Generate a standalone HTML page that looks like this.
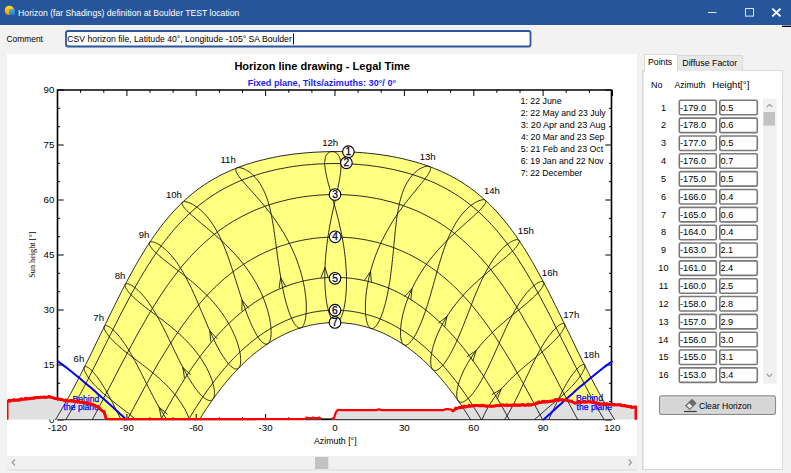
<!DOCTYPE html><html><head><meta charset="utf-8"><style>html,body{margin:0;padding:0;width:791px;height:473px;overflow:hidden;background:#f0f0f0;font-family:"Liberation Sans",sans-serif}</style></head><body><svg width="791" height="473" viewBox="0 0 791 473" font-family="Liberation Sans,sans-serif" style="position:absolute;left:0;top:0;display:block"><defs><clipPath id="plot"><rect x="50" y="90" width="570" height="330"/></clipPath><clipPath id="pan"><rect x="7" y="54" width="630" height="402"/></clipPath></defs><rect x="0" y="0" width="791" height="473" fill="#f2f2f2"/>
<rect x="0" y="0" width="791" height="25" fill="#26559b"/>
<rect x="0" y="25" width="791" height="1" fill="#f7f7f7"/>
<rect x="782" y="25.6" width="9" height="1.4" fill="#000"/>
<defs><linearGradient id="gy" x1="0" y1="0" x2="0" y2="1"><stop offset="0" stop-color="#ffe000"/><stop offset="1" stop-color="#f59a00"/></linearGradient><linearGradient id="gb" x1="0" y1="0" x2="0" y2="1"><stop offset="0" stop-color="#4fb0f0"/><stop offset="1" stop-color="#2a78cc"/></linearGradient></defs><circle cx="9.4" cy="10.4" r="4.7" fill="url(#gy)"/><path d="M9.2 9.0 L14.6 9.0 L14.6 15.1 L9.2 15.1Z" fill="url(#gb)"/>
<text x="18.11" y="15.90" font-size="9.4" fill="#ffffff" textLength="221.20" lengthAdjust="spacingAndGlyphs">Horizon (far Shadings) definition at Boulder TEST location</text>
<rect x="708" y="12" width="8.5" height="1" fill="#e6eaf2"/>
<rect x="745.5" y="8.5" width="8" height="7.6" fill="none" stroke="#dde3ef" stroke-width="1"/>
<path d="M772.3 8.6 L780.5 16.4 M780.5 8.6 L772.3 16.4" stroke="#ffffff" stroke-width="2"/>
<text x="6.48" y="42.00" font-size="9.9" fill="#000" textLength="36.46" lengthAdjust="spacingAndGlyphs">Comment</text>
<rect x="66" y="31" width="464.5" height="15.5" rx="2" fill="#fff" stroke="#2b579a" stroke-width="1.8"/>
<text x="67.27" y="41.80" font-size="9.9" fill="#000" textLength="224.55" lengthAdjust="spacingAndGlyphs">CSV horizon file, Latitude 40°, Longitude -105° SA Boulder</text>
<rect x="293" y="33.5" width="1" height="11" fill="#000"/>
<rect x="7" y="54" width="630" height="402" fill="#fff"/>
<rect x="7" y="456" width="630" height="14" fill="#f0f0f0"/>
<rect x="7" y="469.5" width="630" height="1" fill="#dcdcdc"/>
<rect x="315" y="457" width="13.3" height="12" fill="#c2c2c2"/>
<path d="M15 459.5 L12.2 462.5 L15 465.5" fill="none" stroke="#9a9a9a" stroke-width="1.2"/>
<path d="M628.7 459.5 L631.5 462.5 L628.7 465.5" fill="none" stroke="#9a9a9a" stroke-width="1.2"/>
<text x="234.38" y="69.90" font-size="11.5" font-weight="bold" fill="#000" textLength="175.58" lengthAdjust="spacingAndGlyphs">Horizon line drawing - Legal Time</text>
<text x="247.71" y="86.30" font-size="9.5" font-weight="bold" fill="#1a1aff" textLength="148.37" lengthAdjust="spacingAndGlyphs">Fixed plane, Tilts/azimuths: 30°/ 0°</text>
<text x="43.57" y="93.40" font-size="9.7" fill="#000">90</text>
<text x="43.62" y="148.40" font-size="9.7" fill="#000">75</text>
<text x="43.57" y="203.40" font-size="9.7" fill="#000">60</text>
<text x="43.62" y="258.40" font-size="9.7" fill="#000">45</text>
<text x="43.57" y="313.40" font-size="9.7" fill="#000">30</text>
<text x="43.62" y="368.40" font-size="9.7" fill="#000">15</text>
<text x="48.96" y="423.40" font-size="9.7" fill="#000">0</text>
<text x="47.78" y="430.80" font-size="9.7" fill="#000">-120</text>
<text x="119.84" y="430.80" font-size="9.7" fill="#000">-90</text>
<text x="189.22" y="430.80" font-size="9.7" fill="#000">-60</text>
<text x="258.59" y="430.80" font-size="9.7" fill="#000">-30</text>
<text x="332.31" y="430.80" font-size="9.7" fill="#000">0</text>
<text x="398.99" y="430.80" font-size="9.7" fill="#000">30</text>
<text x="468.29" y="430.80" font-size="9.7" fill="#000">60</text>
<text x="537.69" y="430.80" font-size="9.7" fill="#000">90</text>
<text x="604.23" y="430.80" font-size="9.7" fill="#000">120</text>
<text x="314.00" y="443.50" font-size="9.3" fill="#000" textLength="42.58" lengthAdjust="spacingAndGlyphs">Azimuth [°]</text>
<text x="-23.03" y="0.00" font-size="8.5" font-family="Liberation Serif,serif" fill="#000" textLength="46.12" lengthAdjust="spacingAndGlyphs" transform="translate(34.8 254.7) rotate(-90)">Sun height [°]</text>
<g clip-path="url(#plot)">
<path d="M55.3 420L55.4 419.8L56.5 418L57.6 416.2L58.7 414.3L59.8 412.5L60.9 410.7L62 408.8L63.1 406.9L64.2 405.1L65.2 403.2L66.3 401.3L67.4 399.4L68.4 397.5L69.5 395.6L70.5 393.7L71.6 391.8L72.6 389.8L73.6 387.9L74.7 386L75.7 384L76.7 382.1L77.7 380.1L78.8 378.1L79.8 376.2L80.8 374.2L81.8 372.2L82.8 370.2L83.8 368.2L84.8 366.2L85.8 364.2L86.9 362.2L87.9 360.2L88.9 358.2L89.9 356.1L90.9 354.1L91.9 352.1L92.9 350.1L93.9 348L94.8 346L95.8 343.9L96.8 341.9L97.8 339.8L98.8 337.8L99.8 335.7L100.8 333.6L101.8 331.6L102.9 329.5L103.9 327.4L104.9 325.3L105.9 323.3L106.9 321.2L107.9 319.1L108.9 317L109.9 314.9L111 312.8L112 310.7L113 308.7L114.1 306.6L115.1 304.5L116.1 302.4L117.2 300.3L118.2 298.2L119.3 296.1L120.4 293.9L121.4 291.8L122.5 289.7L123.6 287.6L124.7 285.5L125.8 283.4L126.9 281.3L128 279.2L129.2 277.1L130.3 275L131.5 272.9L132.6 270.8L133.8 268.7L135 266.6L136.2 264.5L137.4 262.4L138.6 260.3L139.8 258.2L141.1 256.1L142.3 254L143.6 251.9L144.9 249.8L146.2 247.7L147.6 245.6L148.9 243.6L150.3 241.5L151.7 239.4L153.1 237.3L154.5 235.3L156 233.2L157.5 231.2L159 229.1L160.5 227.1L162.1 225L163.7 223L165.3 221L167 219L168.6 217L170.4 215L172.1 213L173.9 211L175.8 209L177.7 207.1L179.6 205.1L181.6 203.2L183.6 201.3L185.7 199.4L187.9 197.5L190.1 195.6L192.3 193.7L194.6 191.9L197 190L199.5 188.2L202 186.4L204.6 184.7L207.2 182.9L210 181.2L212.8 179.5L215.8 177.9L218.8 176.2L221.9 174.6L225.1 173.1L228.4 171.5L231.9 170L235.4 168.6L239 167.1L242.8 165.8L246.7 164.4L250.7 163.2L254.8 161.9L259 160.8L263.4 159.7L267.9 158.6L272.5 157.6L277.2 156.7L282 155.8L287 155.1L292 154.3L297.2 153.7L302.4 153.2L307.7 152.7L313.1 152.3L318.5 152L324 151.8L329.5 151.6L335 151.6L340.5 151.6L346 151.8L351.5 152L356.9 152.3L362.3 152.7L367.6 153.2L372.8 153.7L378 154.3L383 155.1L388 155.8L392.8 156.7L397.5 157.6L402.1 158.6L406.6 159.7L411 160.8L415.2 161.9L419.3 163.2L423.3 164.4L427.2 165.8L431 167.1L434.6 168.6L438.1 170L441.6 171.5L444.9 173.1L448.1 174.6L451.2 176.2L454.2 177.9L457.2 179.5L460 181.2L462.8 182.9L465.4 184.7L468 186.4L470.5 188.2L473 190L475.4 191.9L477.7 193.7L479.9 195.6L482.1 197.5L484.3 199.4L486.4 201.3L488.4 203.2L490.4 205.1L492.3 207.1L494.2 209L496.1 211L497.9 213L499.6 215L501.4 217L503 219L504.7 221L506.3 223L507.9 225L509.5 227.1L511 229.1L512.5 231.2L514 233.2L515.5 235.3L516.9 237.3L518.3 239.4L519.7 241.5L521.1 243.6L522.4 245.6L523.8 247.7L525.1 249.8L526.4 251.9L527.7 254L528.9 256.1L530.2 258.2L531.4 260.3L532.6 262.4L533.8 264.5L535 266.6L536.2 268.7L537.4 270.8L538.5 272.9L539.7 275L540.8 277.1L542 279.2L543.1 281.3L544.2 283.4L545.3 285.5L546.4 287.6L547.5 289.7L548.6 291.8L549.6 293.9L550.7 296.1L551.8 298.2L552.8 300.3L553.9 302.4L554.9 304.5L555.9 306.6L557 308.7L558 310.7L559 312.8L560.1 314.9L561.1 317L562.1 319.1L563.1 321.2L564.1 323.3L565.1 325.3L566.1 327.4L567.1 329.5L568.2 331.6L569.2 333.6L570.2 335.7L571.2 337.8L572.2 339.8L573.2 341.9L574.2 343.9L575.2 346L576.1 348L577.1 350.1L578.1 352.1L579.1 354.1L580.1 356.1L581.1 358.2L582.1 360.2L583.1 362.2L584.2 364.2L585.2 366.2L586.2 368.2L587.2 370.2L588.2 372.2L589.2 374.2L590.2 376.2L591.2 378.1L592.3 380.1L593.3 382.1L594.3 384L595.3 386L596.4 387.9L597.4 389.8L598.4 391.8L599.5 393.7L600.5 395.6L601.6 397.5L602.6 399.4L603.7 401.3L604.8 403.2L605.8 405.1L606.9 406.9L608 408.8L609.1 410.7L610.2 412.5L611.3 414.3L612.4 416.2L613.5 418L614.6 419.8L614.7 420L470.8 420L470.2 419L469.1 417.2L467.9 415.4L466.8 413.6L465.7 411.9L464.5 410.1L463.4 408.4L462.2 406.6L461 404.9L459.9 403.2L458.7 401.5L457.5 399.8L456.3 398.2L455.1 396.5L453.9 394.8L452.7 393.2L451.4 391.6L450.2 390L449 388.4L447.7 386.8L446.4 385.2L445.2 383.6L443.9 382.1L442.6 380.5L441.3 379L440 377.5L438.7 376L437.4 374.5L436.1 373.1L434.7 371.6L433.4 370.2L432 368.8L430.7 367.4L429.3 366L427.9 364.6L426.5 363.3L425.1 361.9L423.7 360.6L422.3 359.3L420.8 358L419.4 356.8L417.9 355.5L416.5 354.3L415 353.1L413.5 351.9L412 350.8L410.5 349.6L409 348.5L407.5 347.4L406 346.3L404.5 345.2L402.9 344.2L401.3 343.2L399.8 342.2L398.2 341.2L396.6 340.2L395 339.3L393.4 338.4L391.8 337.5L390.2 336.6L388.6 335.8L386.9 335L385.3 334.2L383.6 333.4L382 332.7L380.3 331.9L378.6 331.3L376.9 330.6L375.3 329.9L373.6 329.3L371.9 328.7L370.1 328.2L368.4 327.6L366.7 327.1L365 326.6L363.2 326.2L361.5 325.7L359.8 325.3L358 325L356.3 324.6L354.5 324.3L352.7 324L351 323.7L349.2 323.5L347.4 323.3L345.7 323.1L343.9 322.9L342.1 322.8L340.3 322.7L338.6 322.6L336.8 322.6L335 322.6L333.2 322.6L331.4 322.6L329.7 322.7L327.9 322.8L326.1 322.9L324.3 323.1L322.6 323.3L320.8 323.5L319 323.7L317.3 324L315.5 324.3L313.7 324.6L312 325L310.2 325.3L308.5 325.7L306.8 326.2L305 326.6L303.3 327.1L301.6 327.6L299.9 328.2L298.1 328.7L296.4 329.3L294.7 329.9L293.1 330.6L291.4 331.3L289.7 331.9L288 332.7L286.4 333.4L284.7 334.2L283.1 335L281.4 335.8L279.8 336.6L278.2 337.5L276.6 338.4L275 339.3L273.4 340.2L271.8 341.2L270.2 342.2L268.7 343.2L267.1 344.2L265.5 345.2L264 346.3L262.5 347.4L261 348.5L259.5 349.6L258 350.8L256.5 351.9L255 353.1L253.5 354.3L252.1 355.5L250.6 356.8L249.2 358L247.7 359.3L246.3 360.6L244.9 361.9L243.5 363.3L242.1 364.6L240.7 366L239.3 367.4L238 368.8L236.6 370.2L235.3 371.6L233.9 373.1L232.6 374.5L231.3 376L230 377.5L228.7 379L227.4 380.5L226.1 382.1L224.8 383.6L223.6 385.2L222.3 386.8L221 388.4L219.8 390L218.6 391.6L217.3 393.2L216.1 394.8L214.9 396.5L213.7 398.2L212.5 399.8L211.3 401.5L210.1 403.2L209 404.9L207.8 406.6L206.6 408.4L205.5 410.1L204.3 411.9L203.2 413.6L202.1 415.4L200.9 417.2L199.8 419L199.2 420Z" fill="#ffff80"/>
</g>
<path d="M57.5 420h6.2M611.5 420h-6.2M57.5 401.7h2.6M611.5 401.7h-2.6M57.5 383.3h2.6M611.5 383.3h-2.6M57.5 365h6.2M611.5 365h-6.2M57.5 346.7h2.6M611.5 346.7h-2.6M57.5 328.3h2.6M611.5 328.3h-2.6M57.5 310h6.2M611.5 310h-6.2M57.5 291.7h2.6M611.5 291.7h-2.6M57.5 273.3h2.6M611.5 273.3h-2.6M57.5 255h6.2M611.5 255h-6.2M57.5 236.7h2.6M611.5 236.7h-2.6M57.5 218.3h2.6M611.5 218.3h-2.6M57.5 200h6.2M611.5 200h-6.2M57.5 181.7h2.6M611.5 181.7h-2.6M57.5 163.3h2.6M611.5 163.3h-2.6M57.5 145h6.2M611.5 145h-6.2M57.5 126.7h2.6M611.5 126.7h-2.6M57.5 108.3h2.6M611.5 108.3h-2.6M57.5 90h6.2M611.5 90h-6.2M57.5 90v6M57.5 420v-6M80.6 90v2.8M80.6 420v-2.8M103.8 90v2.8M103.8 420v-2.8M126.9 90v6M126.9 420v-6M150 90v2.8M150 420v-2.8M173.1 90v2.8M173.1 420v-2.8M196.2 90v6M196.2 420v-6M219.4 90v2.8M219.4 420v-2.8M242.5 90v2.8M242.5 420v-2.8M265.6 90v6M265.6 420v-6M288.8 90v2.8M288.8 420v-2.8M311.9 90v2.8M311.9 420v-2.8M335 90v6M335 420v-6M358.1 90v2.8M358.1 420v-2.8M381.2 90v2.8M381.2 420v-2.8M404.4 90v6M404.4 420v-6M427.5 90v2.8M427.5 420v-2.8M450.6 90v2.8M450.6 420v-2.8M473.8 90v6M473.8 420v-6M496.9 90v2.8M496.9 420v-2.8M520 90v2.8M520 420v-2.8M543.1 90v6M543.1 420v-6M566.2 90v2.8M566.2 420v-2.8M589.4 90v2.8M589.4 420v-2.8M612.5 90v6M612.5 420v-6" stroke="#000" stroke-width="1" fill="none"/>
<path d="M57.5 420V90H611.5V420" stroke="#000" stroke-width="1.6" fill="none"/>
<text x="520.44" y="103.70" font-size="9.8" fill="#000" textLength="41.22" lengthAdjust="spacingAndGlyphs">1: 22 June</text>
<text x="520.67" y="115.78" font-size="9.8" fill="#000" textLength="85.02" lengthAdjust="spacingAndGlyphs">2: 22 May and 23 July</text>
<text x="520.78" y="127.86" font-size="9.8" fill="#000" textLength="84.78" lengthAdjust="spacingAndGlyphs">3: 20 Apr and 23 Aug</text>
<text x="520.93" y="139.94" font-size="9.8" fill="#000" textLength="83.45" lengthAdjust="spacingAndGlyphs">4: 20 Mar and 23 Sep</text>
<text x="520.75" y="152.02" font-size="9.8" fill="#000" textLength="82.40" lengthAdjust="spacingAndGlyphs">5: 21 Feb and 23 Oct</text>
<text x="520.66" y="164.10" font-size="9.8" fill="#000" textLength="82.95" lengthAdjust="spacingAndGlyphs">6: 19 Jan and 22 Nov</text>
<text x="520.67" y="176.18" font-size="9.8" fill="#000" textLength="61.46" lengthAdjust="spacingAndGlyphs">7: 22 December</text>
<g clip-path="url(#pan)">
<path d="M7 419.5L7 419.5L7 401.3L8 401.2L9 400.9L10 401.1L11 400.9L12 400.4L13 400.3L14 400.2L15 400.3L16 400L17 400.2L18 400.1L19 400.2L20 400.1L21 399.4L22 399.4L23 399.2L24 399.4L25 399.2L26 398.8L27 399.1L28 398.7L29 398.7L30 398.8L31 398.3L32 398.3L33 398.3L34 398.4L35 397.8L36 397.5L37 397.3L38 397.7L39 397.6L40 397.3L41 397.3L42 397.4L43 397.2L44 396.9L45 397.3L46 397.4L47 397.1L48 396.9L49 397L50 396.9L51 397.2L52 397.6L53 397.6L54 398.2L55 398.6L56 398.4L57 398.7L58 399.4L59 399L60 399.3L61 399.7L62 399.5L63 399.9L64 400.5L65 400.4L66 400.6L67 401L68 401.1L69 401L70 400.9L71 401L72 401.2L73 401.4L74 401.3L75 401.4L76 401.5L77 402L78 401.8L79 402L80 402.4L81 402.3L82 402.3L83 402.6L84 403.1L85 402.7L86 403.2L87 403.4L88 403.6L89 404L90 403.7L91 403.9L92 404.4L93 404.6L94 405.2L95 405.4L96 406.1L97 406.4L98 407.2L99 407.7L100 408.7L101 409.9L102 410.6L103 411.3L104 411.5L105 414.8L106 418.4L107 419.2L108 419.2L109 419.2L110 419.2L111 419.2L112 419.2L113 419.2L114 419.2L115 419.2L116 419.2L117 419.2L118 419.2L119 419.2L120 419.2L121 419.2L122 419.2L123 419.2L124 419.2L125 419.2L126 419.2L127 419.2L128 419.2L129 419.2L130 419.2L131 419.2L132 419.2L133 419.2L134 419.2L135 419.2L136 419.2L137 419.2L138 419.2L139 419.2L140 419.2L141 419.2L142 419.2L143 419.2L144 419.2L145 419.2L146 419.2L147 419.2L148 419.2L149 419.2L150 419.2L151 419.2L152 419.2L153 419.2L154 419.2L155 419.2L156 419.2L157 419.1L158 419.1L159 419.1L160 419.1L161 419.1L162 419.1L163 419.1L164 419.1L165 419.1L166 419.1L167 419.1L168 419.1L169 419.1L170 419.1L171 419.1L172 419.1L173 419.1L174 419.1L175 419.1L176 419.1L177 419.1L178 419.1L179 419.1L180 419.1L181 419.1L182 419.1L183 419.1L184 419.1L185 419.1L186 419.1L187 419.1L188 419.1L189 419.1L190 419.1L191 419.1L192 419.1L193 419.1L194 419.1L195 419.1L196 419.1L197 419.1L198 419.1L199 419.1L200 419.1L201 419.1L202 419.1L203 419.1L204 419.1L205 419.1L206 419.1L207 419.1L208 419.1L209 419.1L210 419.1L211 419.1L212 419.1L213 419.1L214 419.1L215 419.1L216 419.1L217 419.1L218 419.1L219 419.1L220 419.1L221 419.1L222 419.1L223 419.1L224 419.1L225 419.1L226 419.1L227 419.1L228 419.1L229 419.1L230 419.1L231 419.1L232 419.1L233 419.1L234 419.1L235 419.1L236 419.1L237 419.1L238 419.1L239 419.1L240 419.1L241 419.1L242 419.1L243 419.1L244 419.1L245 419.1L246 419.1L247 419.1L248 419.1L249 419.1L250 419.1L251 419.1L252 419.1L253 419.1L254 419.1L255 419.1L256 419L257 419L258 419L259 419L260 419L261 419L262 419L263 419L264 419L265 419L266 419L267 419L268 419L269 419L270 419L271 419L272 419L273 419L274 419L275 419L276 419L277 419L278 419L279 419L280 419L281 419L282 419L283 419L284 419L285 419L286 419L287 419L288 419L289 419L290 419L291 419L292 419L293 419L294 419L295 419L296 419L297 419L298 419L299 419L300 419L301 419L302 419L303 419L304 419L305 419L306 418.2L307 417.5L308 417.8L309 418L310 418.3L311 418L312 417.8L313 417.5L314 417.8L315 418L316 418.3L317 418L318 417.8L319 417.5L320 418.2L321 419L322 419L323 419L324 419L325 419L326 419L327 419L328 419L329 419L330 419L331 419L332 418.7L333 418.3L334 418L335 415L336 412L337 410.9L338 409.8L339 409.9L340 410L341 410.1L342 410.2L343 410.2L344 410.2L345 410.2L346 410.2L347 410.2L348 410.2L349 410.2L350 410.2L351 410.2L352 410.2L353 410.2L354 410.2L355 410.2L356 410.2L357 410.2L358 410.2L359 410.2L360 410.2L361 410.2L362 410.2L363 410.2L364 410.2L365 410.2L366 410.2L367 410.2L368 410.2L369 410.2L370 410.2L371 410.2L372 410.2L373 410.2L374 410.2L375 410.2L376 410.2L377 409.9L378 409.6L379 409.3L380 409.6L381 409.9L382 410.2L383 410.2L384 410.2L385 410.2L386 410.2L387 410.2L388 410.2L389 410.2L390 410.2L391 410.2L392 410.2L393 410.2L394 410.2L395 410.2L396 410.2L397 410.2L398 410.2L399 410.2L400 410.2L401 410.2L402 410.2L403 410.2L404 410.2L405 410.2L406 410.2L407 410.2L408 410.2L409 410.2L410 410.2L411 410.2L412 410.2L413 410.2L414 410.2L415 410.2L416 410.2L417 410.2L418 410.2L419 410.2L420 410.2L421 410.2L422 410.2L423 410.2L424 410.2L425 410.2L426 410.2L427 410.2L428 410.2L429 410.2L430 410.2L431 410.2L432 410.2L433 410.2L434 410.2L435 410.2L436 410.2L437 410.2L438 410.2L439 410.2L440 410.2L441 410.2L442 410.2L443 410.2L444 409.8L445 409.4L446 409L447 409.1L448 409.2L449 409.3L450 409.4L451 409.5L452 410.1L453 410.9L454 410.2L455 409.2L456 408L457 408.4L458 408.1L459 407.6L460 407.5L461 407.8L462 407.2L463 407.3L464 406.7L465 407.1L466 406.4L467 406.8L468 406.2L469 405.9L470 406.3L471 406L472 405.8L473 406L474 405.6L475 405.5L476 405.4L477 405.4L478 405.6L479 405.8L480 405.7L481 405.9L482 405.9L483 405.9L484 405.7L485 405.8L486 406.3L487 406L488 406.2L489 406L490 406.1L491 406.4L492 406.1L493 406.3L494 406L495 405.8L496 405.7L497 405.6L498 405.6L499 405.7L500 405.3L501 405.5L502 405L503 405L504 405L505 405.5L506 405L507 405.4L508 405.5L509 405.1L510 405.2L511 405.6L512 405L513 405.2L514 405L515 405.4L516 405.3L517 404.9L518 405.3L519 404.9L520 405.4L521 404.9L522 404.8L523 405L524 405.1L525 405.3L526 404.9L527 405.1L528 404.8L529 405.2L530 404.7L531 405.1L532 404.7L533 404.4L534 404.3L535 404.1L536 403.6L537 403.5L538 402.9L539 402.5L540 402.4L541 402.6L542 402.3L543 402L544 401.8L545 402.1L546 401.6L547 402L548 401.8L549 401.4L550 401.2L551 401.3L552 400.9L553 401.1L554 400.7L555 400.3L556 400.2L557 400.2L558 400L559 400.4L560 399.8L561 399.9L562 399.8L563 399.8L564 400.3L565 399.8L566 400.1L567 400.2L568 400.8L569 400.8L570 401L571 401.4L572 401.7L573 402.2L574 402.7L575 403.2L576 403L577 402.5L578 402.7L579 402.4L580 401.7L581 402.3L582 402.2L583 401.7L584 402L585 402.2L586 402.1L587 402.1L588 401.8L589 401.7L590 401.7L591 402.2L592 402.4L593 402.5L594 402.9L595 402.9L596 403.2L597 403.4L598 403.1L599 403.8L600 404L601 403.9L602 403.9L603 404.2L604 404.1L605 403.9L606 404.3L607 404.3L608 404L609 404.5L610 404.5L611 404.5L612 404.5L613 404.9L614 405L615 404.4L616 405L617 404.8L618 404.7L619 404.7L620 404.7L621 405.5L622 405.6L623 405.9L624 405.6L625 406L626 405.9L627 406.4L628 406.3L629 406.7L630 406.7L631 407.2L632 407.3L633 407.3L634 406.9L635 407L636 407L636 419.5L636 419.5Z" fill="#e0e0e0"/>
</g>
<path d="M57.5 419.7H611.5" stroke="#444" stroke-width="1.3" fill="none"/>
<g clip-path="url(#plot)" fill="none" stroke="#111" stroke-width="0.9">
<path d="M55.3 420L55.4 419.8L56.5 418L57.6 416.2L58.7 414.3L59.8 412.5L60.9 410.7L62 408.8L63.1 406.9L64.2 405.1L65.2 403.2L66.3 401.3L67.4 399.4L68.4 397.5L69.5 395.6L70.5 393.7L71.6 391.8L72.6 389.8L73.6 387.9L74.7 386L75.7 384L76.7 382.1L77.7 380.1L78.8 378.1L79.8 376.2L80.8 374.2L81.8 372.2L82.8 370.2L83.8 368.2L84.8 366.2L85.8 364.2L86.9 362.2L87.9 360.2L88.9 358.2L89.9 356.1L90.9 354.1L91.9 352.1L92.9 350.1L93.9 348L94.8 346L95.8 343.9L96.8 341.9L97.8 339.8L98.8 337.8L99.8 335.7L100.8 333.6L101.8 331.6L102.9 329.5L103.9 327.4L104.9 325.3L105.9 323.3L106.9 321.2L107.9 319.1L108.9 317L109.9 314.9L111 312.8L112 310.7L113 308.7L114.1 306.6L115.1 304.5L116.1 302.4L117.2 300.3L118.2 298.2L119.3 296.1L120.4 293.9L121.4 291.8L122.5 289.7L123.6 287.6L124.7 285.5L125.8 283.4L126.9 281.3L128 279.2L129.2 277.1L130.3 275L131.5 272.9L132.6 270.8L133.8 268.7L135 266.6L136.2 264.5L137.4 262.4L138.6 260.3L139.8 258.2L141.1 256.1L142.3 254L143.6 251.9L144.9 249.8L146.2 247.7L147.6 245.6L148.9 243.6L150.3 241.5L151.7 239.4L153.1 237.3L154.5 235.3L156 233.2L157.5 231.2L159 229.1L160.5 227.1L162.1 225L163.7 223L165.3 221L167 219L168.6 217L170.4 215L172.1 213L173.9 211L175.8 209L177.7 207.1L179.6 205.1L181.6 203.2L183.6 201.3L185.7 199.4L187.9 197.5L190.1 195.6L192.3 193.7L194.6 191.9L197 190L199.5 188.2L202 186.4L204.6 184.7L207.2 182.9L210 181.2L212.8 179.5L215.8 177.9L218.8 176.2L221.9 174.6L225.1 173.1L228.4 171.5L231.9 170L235.4 168.6L239 167.1L242.8 165.8L246.7 164.4L250.7 163.2L254.8 161.9L259 160.8L263.4 159.7L267.9 158.6L272.5 157.6L277.2 156.7L282 155.8L287 155.1L292 154.3L297.2 153.7L302.4 153.2L307.7 152.7L313.1 152.3L318.5 152L324 151.8L329.5 151.6L335 151.6L340.5 151.6L346 151.8L351.5 152L356.9 152.3L362.3 152.7L367.6 153.2L372.8 153.7L378 154.3L383 155.1L388 155.8L392.8 156.7L397.5 157.6L402.1 158.6L406.6 159.7L411 160.8L415.2 161.9L419.3 163.2L423.3 164.4L427.2 165.8L431 167.1L434.6 168.6L438.1 170L441.6 171.5L444.9 173.1L448.1 174.6L451.2 176.2L454.2 177.9L457.2 179.5L460 181.2L462.8 182.9L465.4 184.7L468 186.4L470.5 188.2L473 190L475.4 191.9L477.7 193.7L479.9 195.6L482.1 197.5L484.3 199.4L486.4 201.3L488.4 203.2L490.4 205.1L492.3 207.1L494.2 209L496.1 211L497.9 213L499.6 215L501.4 217L503 219L504.7 221L506.3 223L507.9 225L509.5 227.1L511 229.1L512.5 231.2L514 233.2L515.5 235.3L516.9 237.3L518.3 239.4L519.7 241.5L521.1 243.6L522.4 245.6L523.8 247.7L525.1 249.8L526.4 251.9L527.7 254L528.9 256.1L530.2 258.2L531.4 260.3L532.6 262.4L533.8 264.5L535 266.6L536.2 268.7L537.4 270.8L538.5 272.9L539.7 275L540.8 277.1L542 279.2L543.1 281.3L544.2 283.4L545.3 285.5L546.4 287.6L547.5 289.7L548.6 291.8L549.6 293.9L550.7 296.1L551.8 298.2L552.8 300.3L553.9 302.4L554.9 304.5L555.9 306.6L557 308.7L558 310.7L559 312.8L560.1 314.9L561.1 317L562.1 319.1L563.1 321.2L564.1 323.3L565.1 325.3L566.1 327.4L567.1 329.5L568.2 331.6L569.2 333.6L570.2 335.7L571.2 337.8L572.2 339.8L573.2 341.9L574.2 343.9L575.2 346L576.1 348L577.1 350.1L578.1 352.1L579.1 354.1L580.1 356.1L581.1 358.2L582.1 360.2L583.1 362.2L584.2 364.2L585.2 366.2L586.2 368.2L587.2 370.2L588.2 372.2L589.2 374.2L590.2 376.2L591.2 378.1L592.3 380.1L593.3 382.1L594.3 384L595.3 386L596.4 387.9L597.4 389.8L598.4 391.8L599.5 393.7L600.5 395.6L601.6 397.5L602.6 399.4L603.7 401.3L604.8 403.2L605.8 405.1L606.9 406.9L608 408.8L609.1 410.7L610.2 412.5L611.3 414.3L612.4 416.2L613.5 418L614.6 419.8L614.7 420"/>
<path d="M65.7 420L66.4 418.8L67.5 416.9L68.6 415L69.7 413.1L70.8 411.2L71.9 409.2L73 407.3L74.1 405.4L75.2 403.4L76.2 401.5L77.3 399.5L78.4 397.5L79.4 395.6L80.5 393.6L81.6 391.6L82.6 389.6L83.7 387.6L84.7 385.6L85.7 383.6L86.8 381.6L87.8 379.6L88.9 377.6L89.9 375.6L90.9 373.5L92 371.5L93 369.5L94 367.4L95.1 365.4L96.1 363.3L97.1 361.3L98.2 359.2L99.2 357.2L100.2 355.1L101.3 353.1L102.3 351L103.3 348.9L104.3 346.8L105.4 344.8L106.4 342.7L107.5 340.6L108.5 338.5L109.5 336.4L110.6 334.3L111.6 332.2L112.7 330.1L113.7 328.1L114.8 326L115.8 323.9L116.9 321.8L118 319.7L119 317.6L120.1 315.4L121.2 313.3L122.3 311.2L123.4 309.1L124.5 307L125.6 304.9L126.7 302.8L127.8 300.7L128.9 298.6L130.1 296.5L131.2 294.4L132.3 292.3L133.5 290.2L134.7 288.1L135.8 286L137 283.9L138.2 281.8L139.4 279.7L140.7 277.6L141.9 275.5L143.1 273.4L144.4 271.3L145.7 269.2L146.9 267.1L148.2 265.1L149.6 263L150.9 260.9L152.2 258.8L153.6 256.8L155 254.7L156.4 252.6L157.8 250.6L159.3 248.5L160.7 246.5L162.2 244.5L163.8 242.4L165.3 240.4L166.9 238.4L168.4 236.4L170.1 234.4L171.7 232.4L173.4 230.4L175.1 228.4L176.8 226.5L178.6 224.5L180.4 222.6L182.3 220.7L184.2 218.7L186.1 216.8L188.1 214.9L190.1 213.1L192.1 211.2L194.2 209.3L196.4 207.5L198.6 205.7L200.8 203.9L203.2 202.1L205.5 200.4L207.9 198.6L210.4 196.9L213 195.2L215.6 193.6L218.3 191.9L221 190.3L223.9 188.7L226.8 187.2L229.7 185.7L232.8 184.2L235.9 182.7L239.2 181.3L242.5 179.9L245.8 178.6L249.3 177.3L252.9 176.1L256.5 174.9L260.3 173.7L264.1 172.6L268 171.6L272 170.6L276.1 169.6L280.3 168.8L284.5 168L288.8 167.2L293.2 166.5L297.7 165.9L302.2 165.3L306.8 164.9L311.4 164.5L316.1 164.1L320.8 163.9L325.5 163.7L330.2 163.6L335 163.5L339.8 163.6L344.5 163.7L349.2 163.9L353.9 164.1L358.6 164.5L363.2 164.9L367.8 165.3L372.3 165.9L376.8 166.5L381.2 167.2L385.5 168L389.7 168.8L393.9 169.6L398 170.6L402 171.6L405.9 172.6L409.7 173.7L413.5 174.9L417.1 176.1L420.7 177.3L424.2 178.6L427.5 179.9L430.8 181.3L434.1 182.7L437.2 184.2L440.3 185.7L443.2 187.2L446.1 188.7L449 190.3L451.7 191.9L454.4 193.6L457 195.2L459.6 196.9L462.1 198.6L464.5 200.4L466.8 202.1L469.2 203.9L471.4 205.7L473.6 207.5L475.8 209.3L477.9 211.2L479.9 213.1L481.9 214.9L483.9 216.8L485.8 218.7L487.7 220.7L489.6 222.6L491.4 224.5L493.2 226.5L494.9 228.4L496.6 230.4L498.3 232.4L499.9 234.4L501.6 236.4L503.1 238.4L504.7 240.4L506.2 242.4L507.8 244.5L509.3 246.5L510.7 248.5L512.2 250.6L513.6 252.6L515 254.7L516.4 256.8L517.8 258.8L519.1 260.9L520.4 263L521.8 265.1L523.1 267.1L524.3 269.2L525.6 271.3L526.9 273.4L528.1 275.5L529.3 277.6L530.6 279.7L531.8 281.8L533 283.9L534.2 286L535.3 288.1L536.5 290.2L537.7 292.3L538.8 294.4L539.9 296.5L541.1 298.6L542.2 300.7L543.3 302.8L544.4 304.9L545.5 307L546.6 309.1L547.7 311.2L548.8 313.3L549.9 315.4L551 317.6L552 319.7L553.1 321.8L554.2 323.9L555.2 326L556.3 328.1L557.3 330.1L558.4 332.2L559.4 334.3L560.5 336.4L561.5 338.5L562.5 340.6L563.6 342.7L564.6 344.8L565.7 346.8L566.7 348.9L567.7 351L568.7 353.1L569.8 355.1L570.8 357.2L571.8 359.2L572.9 361.3L573.9 363.3L574.9 365.4L576 367.4L577 369.5L578 371.5L579.1 373.5L580.1 375.6L581.1 377.6L582.2 379.6L583.2 381.6L584.3 383.6L585.3 385.6L586.3 387.6L587.4 389.6L588.4 391.6L589.5 393.6L590.6 395.6L591.6 397.5L592.7 399.5L593.8 401.5L594.8 403.4L595.9 405.4L597 407.3L598.1 409.2L599.2 411.2L600.3 413.1L601.4 415L602.5 416.9L603.6 418.8L604.3 420"/>
<path d="M92.1 420L92.1 419.8L93.3 417.8L94.4 415.8L95.5 413.7L96.6 411.7L97.7 409.6L98.8 407.5L99.9 405.5L101 403.4L102.1 401.4L103.2 399.3L104.2 397.2L105.3 395.1L106.4 393L107.5 391L108.6 388.9L109.7 386.8L110.8 384.7L111.9 382.6L113 380.5L114 378.4L115.1 376.3L116.2 374.2L117.3 372.1L118.4 370L119.5 367.9L120.6 365.8L121.7 363.7L122.8 361.6L123.9 359.5L125 357.4L126.1 355.3L127.2 353.2L128.4 351.1L129.5 349L130.6 346.9L131.7 344.8L132.9 342.7L134 340.5L135.2 338.4L136.3 336.3L137.5 334.2L138.6 332.1L139.8 330L141 327.9L142.2 325.9L143.4 323.8L144.6 321.7L145.8 319.6L147 317.5L148.2 315.4L149.4 313.3L150.7 311.3L151.9 309.2L153.2 307.1L154.5 305.1L155.8 303L157.1 301L158.4 298.9L159.7 296.9L161 294.8L162.4 292.8L163.8 290.8L165.1 288.7L166.5 286.7L167.9 284.7L169.4 282.7L170.8 280.7L172.3 278.7L173.8 276.7L175.3 274.8L176.8 272.8L178.3 270.9L179.9 268.9L181.4 267L183 265L184.7 263.1L186.3 261.2L188 259.3L189.7 257.5L191.4 255.6L193.2 253.7L194.9 251.9L196.7 250.1L198.6 248.3L200.4 246.5L202.3 244.7L204.2 242.9L206.2 241.2L208.2 239.4L210.2 237.7L212.2 236L214.3 234.3L216.5 232.7L218.6 231.1L220.8 229.4L223.1 227.9L225.3 226.3L227.7 224.8L230 223.2L232.4 221.8L234.9 220.3L237.4 218.9L239.9 217.5L242.5 216.1L245.1 214.8L247.8 213.5L250.5 212.2L253.2 210.9L256.1 209.7L258.9 208.6L261.8 207.5L264.8 206.4L267.7 205.3L270.8 204.3L273.9 203.4L277 202.4L280.1 201.6L283.4 200.8L286.6 200L289.9 199.2L293.2 198.6L296.6 197.9L299.9 197.4L303.4 196.8L306.8 196.4L310.3 195.9L313.8 195.6L317.3 195.3L320.8 195L324.3 194.8L327.9 194.7L331.4 194.6L335 194.6L338.6 194.6L342.1 194.7L345.7 194.8L349.2 195L352.7 195.3L356.2 195.6L359.7 195.9L363.2 196.4L366.6 196.8L370.1 197.4L373.4 197.9L376.8 198.6L380.1 199.2L383.4 200L386.6 200.8L389.9 201.6L393 202.4L396.1 203.4L399.2 204.3L402.3 205.3L405.2 206.4L408.2 207.5L411.1 208.6L413.9 209.7L416.8 210.9L419.5 212.2L422.2 213.5L424.9 214.8L427.5 216.1L430.1 217.5L432.6 218.9L435.1 220.3L437.6 221.8L440 223.2L442.3 224.8L444.7 226.3L446.9 227.9L449.2 229.4L451.4 231.1L453.5 232.7L455.7 234.3L457.8 236L459.8 237.7L461.8 239.4L463.8 241.2L465.8 242.9L467.7 244.7L469.6 246.5L471.4 248.3L473.3 250.1L475.1 251.9L476.8 253.7L478.6 255.6L480.3 257.5L482 259.3L483.7 261.2L485.3 263.1L487 265L488.6 267L490.1 268.9L491.7 270.9L493.2 272.8L494.7 274.8L496.2 276.7L497.7 278.7L499.2 280.7L500.6 282.7L502.1 284.7L503.5 286.7L504.9 288.7L506.2 290.8L507.6 292.8L509 294.8L510.3 296.9L511.6 298.9L512.9 301L514.2 303L515.5 305.1L516.8 307.1L518.1 309.2L519.3 311.3L520.6 313.3L521.8 315.4L523 317.5L524.2 319.6L525.4 321.7L526.6 323.8L527.8 325.9L529 327.9L530.2 330L531.4 332.1L532.5 334.2L533.7 336.3L534.8 338.4L536 340.5L537.1 342.7L538.3 344.8L539.4 346.9L540.5 349L541.6 351.1L542.8 353.2L543.9 355.3L545 357.4L546.1 359.5L547.2 361.6L548.3 363.7L549.4 365.8L550.5 367.9L551.6 370L552.7 372.1L553.8 374.2L554.9 376.3L556 378.4L557 380.5L558.1 382.6L559.2 384.7L560.3 386.8L561.4 388.9L562.5 391L563.6 393L564.7 395.1L565.8 397.2L566.8 399.3L567.9 401.4L569 403.4L570.1 405.5L571.2 407.5L572.3 409.6L573.4 411.7L574.5 413.7L575.6 415.8L576.7 417.8L577.9 419.8L577.9 420"/>
<path d="M127.2 420L128.2 418.2L129.3 416L130.4 413.9L131.5 411.8L132.6 409.7L133.8 407.6L134.9 405.5L136 403.4L137.1 401.3L138.3 399.2L139.4 397.1L140.5 395L141.6 392.9L142.8 390.8L143.9 388.7L145.1 386.7L146.2 384.6L147.4 382.5L148.5 380.4L149.7 378.3L150.8 376.3L152 374.2L153.2 372.1L154.4 370.1L155.5 368L156.7 365.9L157.9 363.9L159.1 361.8L160.3 359.8L161.5 357.8L162.8 355.7L164 353.7L165.2 351.7L166.5 349.7L167.7 347.7L169 345.7L170.3 343.7L171.6 341.7L172.9 339.7L174.2 337.7L175.5 335.7L176.8 333.8L178.1 331.8L179.5 329.9L180.8 327.9L182.2 326L183.6 324.1L185 322.2L186.4 320.3L187.8 318.4L189.2 316.5L190.7 314.6L192.1 312.8L193.6 310.9L195.1 309.1L196.6 307.2L198.1 305.4L199.6 303.6L201.2 301.8L202.8 300L204.3 298.3L206 296.5L207.6 294.8L209.2 293.1L210.9 291.4L212.5 289.7L214.2 288L216 286.4L217.7 284.7L219.5 283.1L221.2 281.5L223 279.9L224.8 278.3L226.7 276.8L228.6 275.3L230.4 273.8L232.3 272.3L234.3 270.8L236.2 269.4L238.2 268L240.2 266.6L242.2 265.2L244.3 263.8L246.4 262.5L248.5 261.2L250.6 260L252.7 258.7L254.9 257.5L257.1 256.3L259.3 255.2L261.5 254.1L263.8 253L266.1 251.9L268.4 250.9L270.8 249.9L273.1 248.9L275.5 248L277.9 247.1L280.3 246.2L282.8 245.4L285.3 244.6L287.7 243.8L290.3 243.1L292.8 242.4L295.3 241.8L297.9 241.2L300.5 240.6L303.1 240.1L305.7 239.6L308.3 239.2L310.9 238.8L313.6 238.4L316.2 238.1L318.9 237.8L321.6 237.6L324.2 237.4L326.9 237.3L329.6 237.2L332.3 237.1L335 237.1L337.7 237.1L340.4 237.2L343.1 237.3L345.8 237.4L348.4 237.6L351.1 237.8L353.8 238.1L356.4 238.4L359.1 238.8L361.7 239.2L364.3 239.6L366.9 240.1L369.5 240.6L372.1 241.2L374.7 241.8L377.2 242.4L379.7 243.1L382.3 243.8L384.7 244.6L387.2 245.4L389.7 246.2L392.1 247.1L394.5 248L396.9 248.9L399.2 249.9L401.6 250.9L403.9 251.9L406.2 253L408.5 254.1L410.7 255.2L412.9 256.3L415.1 257.5L417.3 258.7L419.4 260L421.5 261.2L423.6 262.5L425.7 263.8L427.8 265.2L429.8 266.6L431.8 268L433.8 269.4L435.7 270.8L437.7 272.3L439.6 273.8L441.4 275.3L443.3 276.8L445.2 278.3L447 279.9L448.8 281.5L450.5 283.1L452.3 284.7L454 286.4L455.8 288L457.5 289.7L459.1 291.4L460.8 293.1L462.4 294.8L464 296.5L465.7 298.3L467.2 300L468.8 301.8L470.4 303.6L471.9 305.4L473.4 307.2L474.9 309.1L476.4 310.9L477.9 312.8L479.3 314.6L480.8 316.5L482.2 318.4L483.6 320.3L485 322.2L486.4 324.1L487.8 326L489.2 327.9L490.5 329.9L491.9 331.8L493.2 333.8L494.5 335.7L495.8 337.7L497.1 339.7L498.4 341.7L499.7 343.7L501 345.7L502.3 347.7L503.5 349.7L504.8 351.7L506 353.7L507.2 355.7L508.5 357.8L509.7 359.8L510.9 361.8L512.1 363.9L513.3 365.9L514.5 368L515.6 370.1L516.8 372.1L518 374.2L519.2 376.3L520.3 378.3L521.5 380.4L522.6 382.5L523.8 384.6L524.9 386.7L526.1 388.7L527.2 390.8L528.4 392.9L529.5 395L530.6 397.1L531.7 399.2L532.9 401.3L534 403.4L535.1 405.5L536.2 407.6L537.4 409.7L538.5 411.8L539.6 413.9L540.7 416L541.8 418.2L542.8 420"/>
<path d="M160.5 420L160.9 419.3L162.1 417.2L163.2 415.2L164.3 413.2L165.4 411.1L166.6 409.1L167.7 407.1L168.8 405.1L170 403.1L171.1 401.1L172.3 399.1L173.5 397.2L174.6 395.2L175.8 393.2L177 391.2L178.2 389.3L179.4 387.3L180.6 385.4L181.8 383.5L183 381.6L184.2 379.6L185.4 377.7L186.7 375.8L187.9 373.9L189.2 372.1L190.4 370.2L191.7 368.3L193 366.5L194.2 364.6L195.5 362.8L196.8 361L198.2 359.1L199.5 357.3L200.8 355.5L202.1 353.8L203.5 352L204.9 350.2L206.2 348.5L207.6 346.8L209 345L210.4 343.3L211.9 341.6L213.3 339.9L214.7 338.3L216.2 336.6L217.7 335L219.1 333.4L220.6 331.8L222.1 330.2L223.7 328.6L225.2 327L226.7 325.5L228.3 324L229.9 322.4L231.5 321L233.1 319.5L234.7 318L236.3 316.6L238 315.2L239.6 313.8L241.3 312.4L243 311L244.7 309.7L246.4 308.4L248.1 307.1L249.9 305.8L251.7 304.6L253.4 303.3L255.2 302.1L257 300.9L258.9 299.8L260.7 298.6L262.6 297.5L264.4 296.5L266.3 295.4L268.2 294.4L270.1 293.4L272.1 292.4L274 291.4L276 290.5L277.9 289.6L279.9 288.8L281.9 287.9L283.9 287.1L286 286.3L288 285.6L290 284.9L292.1 284.2L294.2 283.5L296.2 282.9L298.3 282.3L300.4 281.8L302.6 281.2L304.7 280.7L306.8 280.3L308.9 279.9L311.1 279.5L313.2 279.1L315.4 278.8L317.6 278.5L319.7 278.2L321.9 278L324.1 277.8L326.3 277.6L328.4 277.5L330.6 277.4L332.8 277.4L335 277.4L337.2 277.4L339.4 277.4L341.6 277.5L343.7 277.6L345.9 277.8L348.1 278L350.3 278.2L352.4 278.5L354.6 278.8L356.8 279.1L358.9 279.5L361.1 279.9L363.2 280.3L365.3 280.7L367.4 281.2L369.6 281.8L371.7 282.3L373.8 282.9L375.8 283.5L377.9 284.2L380 284.9L382 285.6L384 286.3L386.1 287.1L388.1 287.9L390.1 288.8L392.1 289.6L394 290.5L396 291.4L397.9 292.4L399.9 293.4L401.8 294.4L403.7 295.4L405.6 296.5L407.4 297.5L409.3 298.6L411.1 299.8L413 300.9L414.8 302.1L416.6 303.3L418.3 304.6L420.1 305.8L421.9 307.1L423.6 308.4L425.3 309.7L427 311L428.7 312.4L430.4 313.8L432 315.2L433.7 316.6L435.3 318L436.9 319.5L438.5 321L440.1 322.4L441.7 324L443.3 325.5L444.8 327L446.3 328.6L447.9 330.2L449.4 331.8L450.9 333.4L452.3 335L453.8 336.6L455.3 338.3L456.7 339.9L458.1 341.6L459.6 343.3L461 345L462.4 346.8L463.8 348.5L465.1 350.2L466.5 352L467.9 353.8L469.2 355.5L470.5 357.3L471.8 359.1L473.2 361L474.5 362.8L475.8 364.6L477 366.5L478.3 368.3L479.6 370.2L480.8 372.1L482.1 373.9L483.3 375.8L484.6 377.7L485.8 379.6L487 381.6L488.2 383.5L489.4 385.4L490.6 387.3L491.8 389.3L493 391.2L494.2 393.2L495.4 395.2L496.5 397.2L497.7 399.1L498.9 401.1L500 403.1L501.2 405.1L502.3 407.1L503.4 409.1L504.6 411.1L505.7 413.2L506.8 415.2L507.9 417.2L509.1 419.3L509.5 420"/>
<path d="M188.4 420L188.6 419.6L189.7 417.7L190.8 415.8L192 414L193.1 412.1L194.3 410.3L195.4 408.4L196.6 406.6L197.7 404.8L198.9 403L200.1 401.2L201.2 399.4L202.4 397.6L203.6 395.9L204.8 394.1L206 392.3L207.3 390.6L208.5 388.9L209.7 387.2L211 385.5L212.2 383.8L213.5 382.1L214.7 380.4L216 378.8L217.3 377.1L218.6 375.5L219.9 373.9L221.2 372.3L222.5 370.7L223.8 369.1L225.2 367.6L226.5 366L227.9 364.5L229.3 363L230.6 361.5L232 360L233.4 358.5L234.8 357.1L236.2 355.6L237.7 354.2L239.1 352.8L240.6 351.4L242 350.1L243.5 348.7L245 347.4L246.5 346.1L248 344.8L249.5 343.5L251 342.2L252.5 341L254.1 339.8L255.7 338.6L257.2 337.4L258.8 336.2L260.4 335.1L262 334L263.6 332.9L265.2 331.8L266.9 330.8L268.5 329.8L270.2 328.8L271.8 327.8L273.5 326.8L275.2 325.9L276.9 325L278.6 324.1L280.3 323.2L282 322.4L283.7 321.6L285.5 320.8L287.2 320.1L289 319.3L290.8 318.6L292.5 317.9L294.3 317.3L296.1 316.7L297.9 316.1L299.7 315.5L301.5 315L303.4 314.5L305.2 314L307 313.5L308.9 313.1L310.7 312.7L312.6 312.3L314.4 312L316.3 311.7L318.1 311.4L320 311.1L321.9 310.9L323.7 310.7L325.6 310.6L327.5 310.4L329.4 310.3L331.2 310.2L333.1 310.2L335 310.2L336.9 310.2L338.8 310.2L340.6 310.3L342.5 310.4L344.4 310.6L346.3 310.7L348.1 310.9L350 311.1L351.9 311.4L353.7 311.7L355.6 312L357.4 312.3L359.3 312.7L361.1 313.1L363 313.5L364.8 314L366.6 314.5L368.5 315L370.3 315.5L372.1 316.1L373.9 316.7L375.7 317.3L377.5 317.9L379.2 318.6L381 319.3L382.8 320.1L384.5 320.8L386.3 321.6L388 322.4L389.7 323.2L391.4 324.1L393.1 325L394.8 325.9L396.5 326.8L398.2 327.8L399.8 328.8L401.5 329.8L403.1 330.8L404.8 331.8L406.4 332.9L408 334L409.6 335.1L411.2 336.2L412.8 337.4L414.3 338.6L415.9 339.8L417.5 341L419 342.2L420.5 343.5L422 344.8L423.5 346.1L425 347.4L426.5 348.7L428 350.1L429.4 351.4L430.9 352.8L432.3 354.2L433.8 355.6L435.2 357.1L436.6 358.5L438 360L439.4 361.5L440.7 363L442.1 364.5L443.5 366L444.8 367.6L446.2 369.1L447.5 370.7L448.8 372.3L450.1 373.9L451.4 375.5L452.7 377.1L454 378.8L455.3 380.4L456.5 382.1L457.8 383.8L459 385.5L460.3 387.2L461.5 388.9L462.7 390.6L464 392.3L465.2 394.1L466.4 395.9L467.6 397.6L468.8 399.4L469.9 401.2L471.1 403L472.3 404.8L473.4 406.6L474.6 408.4L475.7 410.3L476.9 412.1L478 414L479.2 415.8L480.3 417.7L481.4 419.6L481.6 420"/>
<path d="M199.2 420L199.8 419L200.9 417.2L202.1 415.4L203.2 413.6L204.3 411.9L205.5 410.1L206.6 408.4L207.8 406.6L209 404.9L210.1 403.2L211.3 401.5L212.5 399.8L213.7 398.2L214.9 396.5L216.1 394.8L217.3 393.2L218.6 391.6L219.8 390L221 388.4L222.3 386.8L223.6 385.2L224.8 383.6L226.1 382.1L227.4 380.5L228.7 379L230 377.5L231.3 376L232.6 374.5L233.9 373.1L235.3 371.6L236.6 370.2L238 368.8L239.3 367.4L240.7 366L242.1 364.6L243.5 363.3L244.9 361.9L246.3 360.6L247.7 359.3L249.2 358L250.6 356.8L252.1 355.5L253.5 354.3L255 353.1L256.5 351.9L258 350.8L259.5 349.6L261 348.5L262.5 347.4L264 346.3L265.5 345.2L267.1 344.2L268.7 343.2L270.2 342.2L271.8 341.2L273.4 340.2L275 339.3L276.6 338.4L278.2 337.5L279.8 336.6L281.4 335.8L283.1 335L284.7 334.2L286.4 333.4L288 332.7L289.7 331.9L291.4 331.3L293.1 330.6L294.7 329.9L296.4 329.3L298.1 328.7L299.9 328.2L301.6 327.6L303.3 327.1L305 326.6L306.8 326.2L308.5 325.7L310.2 325.3L312 325L313.7 324.6L315.5 324.3L317.3 324L319 323.7L320.8 323.5L322.6 323.3L324.3 323.1L326.1 322.9L327.9 322.8L329.7 322.7L331.4 322.6L333.2 322.6L335 322.6L336.8 322.6L338.6 322.6L340.3 322.7L342.1 322.8L343.9 322.9L345.7 323.1L347.4 323.3L349.2 323.5L351 323.7L352.7 324L354.5 324.3L356.3 324.6L358 325L359.8 325.3L361.5 325.7L363.2 326.2L365 326.6L366.7 327.1L368.4 327.6L370.1 328.2L371.9 328.7L373.6 329.3L375.3 329.9L376.9 330.6L378.6 331.3L380.3 331.9L382 332.7L383.6 333.4L385.3 334.2L386.9 335L388.6 335.8L390.2 336.6L391.8 337.5L393.4 338.4L395 339.3L396.6 340.2L398.2 341.2L399.8 342.2L401.3 343.2L402.9 344.2L404.5 345.2L406 346.3L407.5 347.4L409 348.5L410.5 349.6L412 350.8L413.5 351.9L415 353.1L416.5 354.3L417.9 355.5L419.4 356.8L420.8 358L422.3 359.3L423.7 360.6L425.1 361.9L426.5 363.3L427.9 364.6L429.3 366L430.7 367.4L432 368.8L433.4 370.2L434.7 371.6L436.1 373.1L437.4 374.5L438.7 376L440 377.5L441.3 379L442.6 380.5L443.9 382.1L445.2 383.6L446.4 385.2L447.7 386.8L449 388.4L450.2 390L451.4 391.6L452.7 393.2L453.9 394.8L455.1 396.5L456.3 398.2L457.5 399.8L458.7 401.5L459.9 403.2L461 404.9L462.2 406.6L463.4 408.4L464.5 410.1L465.7 411.9L466.8 413.6L467.9 415.4L469.1 417.2L470.2 419L470.8 420"/>
<path d="M121.2 420L120.2 418L119.1 415.7L117.9 413.5L116.8 411.2L115.7 409L114.6 406.8L113.5 404.6L112.4 402.5L111.3 400.4L110.2 398.4L109.2 396.4L108.1 394.4L107 392.5L106 390.6L104.9 388.8L103.9 387.1L102.9 385.4L101.8 383.8L100.8 382.2L99.8 380.7L98.9 379.3L97.9 377.9L97 376.7L96 375.5L95.1 374.3L94.3 373.3L93.4 372.3L92.6 371.4L91.8 370.6L91 369.9L90.3 369.2L89.6 368.6L88.9 368.1L88.3 367.6L87.7 367.3L87.1 367L86.6 366.8L86.1 366.6L85.7 366.6L85.3 366.5L85 366.6L84.7 366.7L84.5 366.9L84.3 367.2L84.2 367.5L84.1 367.9L84.1 368.3L84.1 368.8L84.2 369.3L84.3 369.9L84.5 370.5L84.8 371.2L85.1 371.9L85.5 372.7L85.9 373.5L86.4 374.4L86.9 375.2L87.5 376.2L88.1 377.1L88.8 378.1L89.6 379.1L90.3 380.1L91.2 381.1L92.1 382.2L93 383.3L94 384.4L95.1 385.5L96.2 386.6L97.3 387.7L98.5 388.9L99.7 390.1L100.9 391.2L102.2 392.4L103.6 393.6L104.9 394.8L106.3 395.9L107.8 397.1L109.2 398.3L110.7 399.6L112.2 400.8L113.8 402L115.3 403.2L116.9 404.4L118.5 405.7L120.1 406.9L121.7 408.2L123.3 409.4L125 410.7L126.6 412L128.3 413.2L129.9 414.5L131.5 415.9L133.2 417.2L134.8 418.6L136.4 419.9L136.5 420"/>
<path d="M167.3 420L166.2 418.5L165 416.8L163.8 415L162.7 413.1L161.5 411.2L160.3 409.2L159.1 407.2L157.9 405.1L156.7 403L155.5 400.9L154.3 398.7L153.2 396.5L152 394.2L150.8 392L149.6 389.7L148.4 387.4L147.3 385.1L146.1 382.8L145 380.5L143.8 378.2L142.7 375.9L141.5 373.6L140.4 371.3L139.2 369.1L138.1 366.9L136.9 364.7L135.8 362.5L134.6 360.4L133.5 358.3L132.4 356.3L131.2 354.3L130.1 352.3L129 350.4L127.8 348.6L126.7 346.8L125.6 345.1L124.5 343.5L123.4 341.9L122.3 340.4L121.2 338.9L120.2 337.5L119.1 336.2L118.1 335L117.1 333.9L116.1 332.8L115.1 331.8L114.2 330.9L113.3 330L112.4 329.2L111.6 328.5L110.8 327.9L110 327.4L109.3 326.9L108.6 326.5L107.9 326.2L107.3 325.9L106.8 325.8L106.3 325.7L105.8 325.6L105.4 325.6L105 325.7L104.7 325.9L104.5 326.1L104.3 326.4L104.2 326.7L104.1 327.1L104.1 327.5L104.2 328L104.3 328.5L104.5 329.1L104.7 329.7L105 330.4L105.4 331.1L105.8 331.8L106.2 332.6L106.8 333.4L107.4 334.2L108 335.1L108.7 336L109.5 336.9L110.3 337.9L111.2 338.8L112.1 339.8L113.1 340.8L114.1 341.9L115.2 342.9L116.3 344L117.5 345L118.7 346.1L120 347.2L121.3 348.3L122.6 349.4L124 350.6L125.4 351.7L126.8 352.8L128.3 354L129.8 355.2L131.4 356.3L132.9 357.5L134.5 358.7L136.1 359.9L137.7 361.1L139.4 362.4L141 363.6L142.7 364.9L144.3 366.1L146 367.4L147.7 368.7L149.3 370L151 371.4L152.7 372.7L154.3 374.1L156 375.5L157.6 377L159.3 378.4L160.9 379.9L162.5 381.3L164 382.8L165.6 384.3L167.1 385.9L168.6 387.4L170 389L171.5 390.6L172.8 392.2L174.2 393.8L175.5 395.4L176.8 397L178 398.6L179.2 400.2L180.3 401.9L181.4 403.5L182.4 405.1L183.4 406.7L184.3 408.3L185.2 409.9L186 411.5L186.8 413L187.5 414.6L188.1 416.1L188.7 417.6L189.3 419L189.6 420"/>
<path d="M210.8 400.4L210.2 400.5L209.6 400.5L208.9 400.4L208.2 400.1L207.4 399.8L206.6 399.4L205.8 399L204.9 398.4L204 397.7L203.1 397L202.2 396.1L201.2 395.2L200.2 394.1L199.2 393L198.2 391.8L197.2 390.6L196.1 389.2L195 387.8L194 386.2L192.9 384.6L191.8 383L190.7 381.2L189.6 379.4L188.4 377.6L187.3 375.6L186.2 373.7L185.1 371.6L183.9 369.5L182.8 367.4L181.7 365.2L180.5 363L179.4 360.7L178.2 358.4L177.1 356.1L176 353.7L174.8 351.4L173.7 349L172.5 346.6L171.4 344.2L170.2 341.8L169.1 339.4L167.9 337L166.8 334.7L165.6 332.3L164.5 330L163.3 327.7L162.1 325.4L160.9 323.1L159.8 320.9L158.6 318.7L157.4 316.6L156.2 314.5L155 312.5L153.8 310.5L152.6 308.6L151.4 306.7L150.2 304.9L149 303.1L147.8 301.5L146.6 299.8L145.4 298.3L144.2 296.8L143 295.5L141.9 294.1L140.7 292.9L139.6 291.8L138.5 290.7L137.4 289.7L136.4 288.8L135.3 287.9L134.4 287.2L133.4 286.5L132.5 285.9L131.6 285.3L130.8 284.9L130 284.5L129.3 284.2L128.6 284L128 283.8L127.4 283.7L126.9 283.7L126.4 283.7L126 283.8L125.7 284L125.4 284.2L125.2 284.5L125.1 284.8L125 285.2L125 285.6L125.1 286.1L125.2 286.6L125.4 287.2L125.7 287.8L126.1 288.4L126.5 289.1L126.9 289.9L127.5 290.6L128.1 291.4L128.8 292.3L129.5 293.1L130.3 294L131.2 294.9L132.1 295.8L133.1 296.8L134.1 297.8L135.2 298.8L136.4 299.8L137.5 300.8L138.8 301.9L140.1 303L141.4 304.1L142.8 305.2L144.2 306.3L145.7 307.4L147.2 308.6L148.7 309.8L150.3 310.9L151.9 312.1L153.5 313.4L155.2 314.6L156.8 315.9L158.5 317.1L160.2 318.4L162 319.7L163.7 321L165.4 322.4L167.2 323.8L168.9 325.1L170.7 326.5L172.4 328L174.1 329.4L175.9 330.9L177.6 332.4L179.3 334L181 335.5L182.7 337.1L184.3 338.7L186 340.4L187.6 342L189.2 343.7L190.7 345.4L192.2 347.1L193.7 348.8L195.1 350.6L196.5 352.3L197.8 354.1L199.1 355.9L200.4 357.7L201.6 359.5L202.7 361.3L203.9 363.1L204.9 364.9L205.9 366.6L206.9 368.4L207.8 370.2L208.6 371.9L209.4 373.6L210.1 375.3L210.8 377L211.4 378.6L212 380.3L212.5 381.8L212.9 383.3L213.3 384.8L213.7 386.3L213.9 387.6L214.2 389L214.3 390.2L214.4 391.4L214.5 392.6L214.5 393.6L214.4 394.6L214.3 395.6L214.2 396.4L214 397.2L213.7 397.9L213.4 398.5L213 399.1L212.6 399.5L212.2 399.9L211.7 400.2L211.1 400.4L210.8 400.4"/>
<path d="M236.2 369L235.6 369L234.9 368.8L234.2 368.5L233.5 368.2L232.8 367.7L232 367.1L231.2 366.5L230.4 365.7L229.5 364.9L228.6 364L227.7 362.9L226.8 361.8L225.9 360.6L225 359.3L224 357.9L223 356.4L222.1 354.9L221.1 353.3L220.1 351.5L219.1 349.8L218.1 347.9L217 346L216 344L215 342L214 339.8L212.9 337.7L211.9 335.4L210.9 333.2L209.8 330.9L208.8 328.5L207.7 326.1L206.7 323.7L205.6 321.2L204.6 318.7L203.5 316.2L202.5 313.7L201.4 311.2L200.3 308.6L199.2 306L198.1 303.5L197.1 301L196 298.4L194.9 295.9L193.7 293.4L192.6 291L191.5 288.5L190.3 286.1L189.2 283.7L188 281.4L186.8 279.1L185.6 276.8L184.4 274.6L183.1 272.4L181.9 270.3L180.6 268.3L179.3 266.3L178.1 264.4L176.8 262.5L175.5 260.8L174.2 259L172.9 257.4L171.6 255.9L170.3 254.4L169 253L167.7 251.7L166.4 250.5L165.2 249.3L163.9 248.2L162.7 247.3L161.5 246.4L160.4 245.5L159.3 244.8L158.2 244.2L157.2 243.6L156.2 243.1L155.3 242.7L154.4 242.4L153.6 242.1L152.8 241.9L152.1 241.8L151.5 241.8L151 241.8L150.5 241.9L150.1 242L149.8 242.2L149.5 242.5L149.4 242.8L149.3 243.2L149.3 243.6L149.4 244.1L149.5 244.7L149.7 245.2L150.1 245.9L150.5 246.5L150.9 247.2L151.5 248L152.1 248.8L152.8 249.6L153.6 250.4L154.5 251.3L155.4 252.2L156.4 253.2L157.5 254.2L158.6 255.2L159.8 256.2L161 257.3L162.3 258.3L163.7 259.4L165.1 260.6L166.5 261.7L168.1 262.9L169.6 264.1L171.2 265.4L172.8 266.6L174.5 267.9L176.2 269.2L177.9 270.5L179.7 271.9L181.5 273.2L183.3 274.7L185.1 276.1L186.9 277.5L188.7 279L190.6 280.5L192.4 282.1L194.3 283.6L196.1 285.2L198 286.8L199.8 288.5L201.6 290.2L203.4 291.9L205.2 293.6L207 295.3L208.7 297.2L210.5 299L212.1 300.8L213.8 302.7L215.4 304.6L217 306.6L218.6 308.5L220.1 310.5L221.5 312.5L222.9 314.4L224.3 316.5L225.6 318.5L226.9 320.5L228.1 322.5L229.2 324.5L230.4 326.6L231.4 328.6L232.4 330.6L233.3 332.6L234.2 334.5L235 336.5L235.8 338.4L236.5 340.3L237.2 342.2L237.8 344L238.3 345.8L238.8 347.6L239.2 349.3L239.6 351L239.9 352.6L240.2 354.1L240.4 355.6L240.5 357L240.6 358.4L240.7 359.7L240.7 360.9L240.6 362L240.5 363.1L240.4 364.1L240.2 365L240 365.8L239.7 366.5L239.3 367.2L239 367.7L238.6 368.2L238.1 368.5L237.6 368.8L237.1 368.9L236.5 369L236.2 369"/>
<path d="M265.2 344L264.6 343.7L264 343.4L263.3 342.9L262.6 342.4L261.9 341.8L261.1 341L260.4 340.2L259.6 339.2L258.8 338.2L258 337L257.2 335.8L256.4 334.4L255.6 333L254.8 331.5L253.9 329.9L253.1 328.2L252.2 326.5L251.4 324.6L250.5 322.7L249.7 320.7L248.8 318.6L248 316.5L247.1 314.3L246.3 312L245.4 309.7L244.6 307.3L243.7 304.9L242.9 302.4L242 299.9L241.2 297.3L240.3 294.7L239.5 292.1L238.6 289.4L237.8 286.7L236.9 284L236.1 281.3L235.2 278.6L234.4 275.8L233.5 273.1L232.6 270.3L231.7 267.6L230.8 264.9L229.9 262.2L229 259.5L228.1 256.8L227.1 254.2L226.1 251.6L225.1 249L224.1 246.4L223 243.9L222 241.5L220.9 239.1L219.7 236.7L218.6 234.4L217.4 232.2L216.2 230L215 227.9L213.7 225.8L212.4 223.8L211.1 221.9L209.8 220.1L208.4 218.4L207.1 216.7L205.7 215.1L204.3 213.6L202.9 212.2L201.5 210.9L200.1 209.7L198.7 208.5L197.4 207.5L196.1 206.5L194.7 205.6L193.5 204.8L192.2 204.2L191 203.5L189.9 203L188.8 202.6L187.8 202.2L186.9 202L186 201.8L185.2 201.7L184.5 201.6L183.9 201.7L183.3 201.8L182.9 202L182.5 202.2L182.3 202.5L182.1 202.9L182.1 203.3L182.1 203.8L182.3 204.4L182.5 205L182.8 205.6L183.3 206.3L183.8 207.1L184.4 207.9L185.1 208.7L186 209.6L186.8 210.6L187.8 211.5L188.9 212.6L190 213.6L191.2 214.7L192.5 215.9L193.9 217L195.3 218.2L196.7 219.5L198.3 220.8L199.9 222.1L201.5 223.5L203.2 224.9L204.9 226.3L206.6 227.8L208.4 229.3L210.2 230.8L212.1 232.4L214 234L215.8 235.6L217.7 237.3L219.6 239L221.6 240.8L223.5 242.5L225.4 244.4L227.3 246.2L229.2 248.1L231.1 250L232.9 252L234.8 253.9L236.6 255.9L238.4 258L240.2 260.1L241.9 262.2L243.6 264.3L245.3 266.5L246.9 268.7L248.5 270.9L250 273.1L251.5 275.4L252.9 277.7L254.3 280L255.7 282.3L257 284.6L258.2 286.9L259.4 289.2L260.5 291.5L261.6 293.8L262.6 296.1L263.5 298.4L264.4 300.7L265.2 302.9L266 305.2L266.7 307.4L267.4 309.5L268 311.7L268.5 313.8L269 315.8L269.5 317.8L269.9 319.8L270.2 321.7L270.5 323.6L270.7 325.4L270.9 327.1L271 328.8L271.1 330.4L271.1 331.9L271.1 333.3L271 334.7L270.9 336L270.8 337.2L270.6 338.3L270.4 339.3L270.1 340.2L269.8 341L269.5 341.8L269.1 342.4L268.7 342.9L268.2 343.4L267.8 343.7L267.2 344L266.7 344.1L266.1 344.1L265.5 344L265.2 344"/>
<path d="M298 327.4L297.4 327L296.8 326.5L296.1 325.8L295.5 325.1L294.9 324.2L294.2 323.3L293.6 322.2L292.9 321.1L292.3 319.8L291.6 318.5L291 317L290.3 315.5L289.7 313.8L289.1 312.1L288.4 310.3L287.8 308.4L287.2 306.4L286.6 304.4L286 302.3L285.4 300.1L284.8 297.8L284.3 295.4L283.7 293L283.2 290.6L282.7 288.1L282.2 285.5L281.7 282.9L281.2 280.2L280.7 277.5L280.3 274.8L279.8 272L279.4 269.2L279 266.4L278.5 263.5L278.1 260.6L277.7 257.7L277.3 254.8L277 251.9L276.6 249L276.2 246.1L275.8 243.2L275.4 240.3L275 237.4L274.6 234.6L274.2 231.7L273.8 228.9L273.4 226.1L272.9 223.3L272.4 220.6L271.9 217.9L271.4 215.2L270.9 212.6L270.3 210L269.7 207.5L269 205L268.3 202.6L267.6 200.2L266.8 197.9L266 195.7L265.1 193.5L264.2 191.4L263.2 189.4L262.2 187.5L261.2 185.6L260.1 183.8L259 182.1L257.8 180.5L256.6 179L255.4 177.6L254.2 176.2L252.9 175L251.6 173.8L250.3 172.8L249.1 171.8L247.8 171L246.5 170.2L245.3 169.6L244.2 169L243 168.5L242 168.2L240.9 167.9L240 167.7L239.1 167.6L238.4 167.6L237.7 167.7L237.1 167.8L236.6 168.1L236.2 168.4L236 168.8L235.8 169.3L235.8 169.8L235.8 170.5L236 171.2L236.3 172L236.7 172.8L237.2 173.7L237.8 174.7L238.5 175.7L239.3 176.8L240.2 178L241.1 179.2L242.2 180.5L243.3 181.8L244.5 183.2L245.8 184.7L247.1 186.2L248.5 187.7L250 189.3L251.5 191L253 192.7L254.6 194.4L256.2 196.3L257.8 198.1L259.4 200L261.1 201.9L262.8 203.9L264.5 206L266.2 208L267.8 210.2L269.5 212.3L271.2 214.5L272.9 216.7L274.5 219L276.1 221.3L277.7 223.7L279.3 226L280.9 228.4L282.4 230.9L283.9 233.3L285.3 235.8L286.7 238.3L288.1 240.9L289.4 243.4L290.7 246L291.9 248.6L293.1 251.2L294.3 253.9L295.4 256.5L296.4 259.1L297.4 261.8L298.3 264.4L299.2 267L300 269.6L300.8 272.2L301.5 274.8L302.2 277.4L302.8 279.9L303.4 282.4L303.9 284.9L304.4 287.3L304.8 289.7L305.1 292.1L305.4 294.4L305.7 296.7L305.9 298.9L306.1 301.1L306.2 303.2L306.3 305.2L306.3 307.1L306.3 309L306.3 310.9L306.2 312.6L306 314.3L305.9 315.9L305.7 317.3L305.5 318.8L305.2 320.1L304.9 321.3L304.6 322.4L304.2 323.4L303.9 324.4L303.5 325.2L303 325.9L302.6 326.5L302.1 327L301.6 327.4L301.1 327.7L300.6 327.9L300 328L299.5 328L298.9 327.8L298.3 327.6L298 327.4"/>
<path d="M333.3 321.2L332.7 320.6L332.2 319.9L331.7 319.1L331.2 318.2L330.7 317.2L330.2 316L329.7 314.8L329.2 313.5L328.8 312L328.4 310.5L328 308.9L327.6 307.2L327.2 305.4L326.8 303.5L326.5 301.5L326.2 299.5L326 297.4L325.7 295.2L325.5 292.9L325.3 290.6L325.1 288.2L325 285.8L324.9 283.3L324.8 280.7L324.8 278.1L324.8 275.5L324.8 272.8L324.9 270.1L325 267.3L325.1 264.5L325.3 261.7L325.5 258.8L325.7 256L326 253.1L326.3 250.2L326.6 247.3L326.9 244.4L327.3 241.4L327.7 238.5L328.2 235.6L328.6 232.7L329.1 229.9L329.6 227L330.1 224.1L330.7 221.3L331.2 218.5L331.8 215.7L332.4 213L333 210.2L333.6 207.5L334.1 204.9L334.7 202.3L335.3 199.7L335.9 197.1L336.4 194.6L337 192.2L337.5 189.8L338 187.4L338.5 185.1L338.9 182.9L339.3 180.7L339.7 178.6L340 176.5L340.3 174.5L340.6 172.6L340.7 170.7L340.9 169L340.9 167.2L340.9 165.6L340.9 164.1L340.8 162.6L340.6 161.2L340.3 159.9L340 158.7L339.6 157.6L339.2 156.5L338.7 155.6L338.1 154.7L337.5 154L336.8 153.3L336.1 152.8L335.3 152.3L334.6 152L333.8 151.7L333 151.6L332.2 151.6L331.4 151.6L330.6 151.8L329.8 152L329.1 152.4L328.4 152.9L327.7 153.4L327.1 154.1L326.6 154.8L326.1 155.7L325.7 156.6L325.4 157.6L325.1 158.8L324.9 160L324.8 161.3L324.7 162.6L324.7 164.1L324.8 165.6L325 167.2L325.2 168.9L325.5 170.7L325.8 172.5L326.2 174.4L326.6 176.4L327.1 178.4L327.6 180.5L328.1 182.6L328.7 184.8L329.4 187.1L330 189.4L330.7 191.8L331.4 194.2L332.1 196.6L332.8 199.1L333.5 201.7L334.2 204.3L335 206.9L335.7 209.5L336.4 212.2L337.1 214.9L337.8 217.6L338.5 220.4L339.2 223.2L339.8 226L340.4 228.8L341 231.6L341.6 234.5L342.2 237.3L342.7 240.2L343.2 243.1L343.7 246L344.1 248.9L344.5 251.7L344.8 254.6L345.2 257.4L345.5 260.3L345.7 263.1L345.9 265.8L346.1 268.6L346.3 271.3L346.4 274L346.5 276.6L346.5 279.2L346.5 281.8L346.5 284.3L346.4 286.8L346.3 289.2L346.2 291.5L346 293.8L345.8 296L345.6 298.2L345.3 300.2L345.1 302.2L344.8 304.2L344.4 306L344.1 307.8L343.7 309.4L343.3 311L342.9 312.5L342.5 313.9L342 315.2L341.5 316.4L341 317.5L340.6 318.5L340 319.4L339.5 320.1L339 320.8L338.5 321.4L337.9 321.8L337.4 322.2L336.8 322.4L336.3 322.5L335.7 322.6L335.2 322.5L334.6 322.2L334.1 321.9L333.5 321.5L333.3 321.2"/>
<path d="M368.7 326.3L368.2 325.5L367.8 324.7L367.5 323.7L367.1 322.7L366.8 321.5L366.5 320.2L366.2 318.9L366 317.4L365.8 315.9L365.6 314.3L365.5 312.6L365.4 310.8L365.4 308.9L365.4 307L365.4 305L365.4 302.9L365.6 300.8L365.7 298.6L365.9 296.3L366.2 294L366.4 291.6L366.8 289.2L367.2 286.7L367.6 284.3L368.1 281.7L368.6 279.2L369.2 276.6L369.8 273.9L370.5 271.3L371.3 268.7L372 266L372.9 263.3L373.8 260.6L374.7 257.9L375.7 255.2L376.8 252.5L377.8 249.9L379 247.2L380.2 244.5L381.4 241.9L382.7 239.3L384 236.7L385.3 234.1L386.7 231.6L388.1 229.1L389.5 226.6L391 224.1L392.5 221.7L394 219.3L395.6 216.9L397.1 214.6L398.7 212.3L400.3 210.1L401.9 207.9L403.5 205.7L405.1 203.6L406.7 201.6L408.2 199.6L409.8 197.6L411.3 195.7L412.9 193.8L414.4 192L415.8 190.2L417.2 188.5L418.6 186.8L419.9 185.2L421.2 183.6L422.4 182.1L423.6 180.7L424.6 179.3L425.6 178L426.5 176.7L427.4 175.6L428.1 174.4L428.8 173.4L429.3 172.4L429.8 171.4L430.1 170.6L430.4 169.8L430.5 169.1L430.5 168.4L430.5 167.8L430.3 167.4L430 166.9L429.6 166.6L429.1 166.4L428.5 166.2L427.8 166.2L427 166.2L426.2 166.3L425.2 166.5L424.2 166.8L423.2 167.2L422.1 167.7L420.9 168.3L419.7 168.9L418.5 169.7L417.3 170.6L416.1 171.6L414.9 172.6L413.7 173.8L412.5 175.1L411.4 176.4L410.2 177.9L409.1 179.4L408.1 181L407 182.7L406.1 184.5L405.1 186.4L404.2 188.3L403.4 190.4L402.6 192.5L401.9 194.6L401.2 196.9L400.5 199.2L399.9 201.5L399.3 204L398.8 206.4L398.3 209L397.9 211.5L397.4 214.2L397 216.8L396.6 219.5L396.3 222.3L396 225L395.6 227.8L395.3 230.6L395 233.5L394.8 236.3L394.5 239.2L394.2 242.1L393.9 244.9L393.7 247.8L393.4 250.8L393.1 253.7L392.8 256.6L392.5 259.5L392.2 262.3L391.9 265.2L391.5 268L391.2 270.9L390.8 273.6L390.5 276.4L390.1 279.1L389.7 281.8L389.2 284.4L388.8 287L388.3 289.6L387.9 292L387.4 294.5L386.9 296.8L386.4 299.1L385.8 301.4L385.3 303.6L384.7 305.6L384.1 307.7L383.6 309.6L383 311.5L382.4 313.3L381.8 314.9L381.1 316.5L380.5 318.1L379.9 319.5L379.2 320.8L378.6 322L378 323.1L377.3 324.2L376.7 325.1L376.1 325.9L375.5 326.6L374.9 327.2L374.2 327.7L373.7 328.1L373.1 328.4L372.5 328.5L371.9 328.6L371.4 328.5L370.8 328.4L370.3 328.1L369.8 327.7L369.3 327.2L368.9 326.6L368.7 326.3"/>
<path d="M401.8 341.9L401.5 341L401.2 340.1L401 339L400.8 337.9L400.6 336.7L400.5 335.3L400.5 333.9L400.5 332.5L400.5 330.9L400.6 329.3L400.7 327.6L400.9 325.8L401.1 324L401.4 322.1L401.7 320.1L402.1 318.1L402.5 316L403 313.9L403.6 311.8L404.1 309.6L404.8 307.3L405.5 305.1L406.3 302.8L407.1 300.5L408 298.1L408.9 295.8L409.9 293.4L410.9 291.1L412 288.7L413.2 286.3L414.4 283.9L415.6 281.5L416.9 279.2L418.3 276.8L419.7 274.5L421.2 272.1L422.7 269.8L424.2 267.5L425.8 265.3L427.4 263L429.1 260.8L430.8 258.6L432.5 256.5L434.3 254.4L436 252.3L437.8 250.2L439.7 248.2L441.5 246.2L443.3 244.3L445.2 242.4L447.1 240.5L448.9 238.6L450.8 236.8L452.6 235.1L454.5 233.3L456.3 231.6L458.1 230L459.9 228.4L461.6 226.8L463.4 225.2L465 223.7L466.7 222.3L468.3 220.8L469.9 219.4L471.4 218.1L472.8 216.8L474.2 215.5L475.6 214.3L476.8 213.1L478 211.9L479.1 210.8L480.2 209.8L481.2 208.8L482 207.8L482.8 206.9L483.5 206L484.1 205.2L484.7 204.4L485.1 203.7L485.4 203L485.7 202.4L485.8 201.9L485.8 201.4L485.8 200.9L485.6 200.5L485.3 200.2L485 200L484.5 199.8L484 199.7L483.4 199.7L482.7 199.7L481.9 199.9L481 200.1L480 200.3L479 200.7L478 201.2L476.9 201.7L475.7 202.3L474.5 203L473.2 203.9L471.9 204.7L470.6 205.7L469.3 206.8L468 208L466.6 209.2L465.3 210.6L464 212L462.6 213.5L461.3 215.1L460 216.8L458.7 218.6L457.5 220.4L456.2 222.4L455 224.4L453.8 226.4L452.7 228.6L451.6 230.8L450.5 233.1L449.4 235.4L448.3 237.8L447.3 240.2L446.4 242.7L445.4 245.2L444.5 247.8L443.6 250.4L442.7 253L441.8 255.7L441 258.3L440.1 261L439.3 263.8L438.5 266.5L437.7 269.2L436.9 272L436.1 274.8L435.4 277.5L434.6 280.3L433.8 283.1L433.1 285.8L432.3 288.5L431.5 291.2L430.8 293.9L430 296.5L429.2 299.1L428.4 301.6L427.7 304.2L426.9 306.6L426.1 309L425.3 311.4L424.5 313.7L423.7 316L422.9 318.1L422.1 320.3L421.3 322.3L420.5 324.3L419.7 326.2L418.8 328L418 329.8L417.2 331.4L416.4 333L415.6 334.5L414.8 335.9L414 337.2L413.3 338.4L412.5 339.5L411.7 340.6L411 341.5L410.2 342.3L409.5 343L408.8 343.7L408.2 344.2L407.5 344.6L406.8 344.9L406.2 345.1L405.6 345.2L405.1 345.2L404.5 345.1L404 344.9L403.5 344.6L403.1 344.2L402.7 343.6L402.3 343L401.9 342.3L401.8 341.9"/>
<path d="M431.2 366.2L431 365.3L430.9 364.3L430.8 363.2L430.7 362L430.7 360.8L430.8 359.4L430.9 358.1L431.1 356.6L431.3 355.1L431.5 353.5L431.9 351.8L432.2 350.1L432.7 348.4L433.1 346.6L433.7 344.7L434.3 342.8L434.9 340.9L435.6 338.9L436.4 337L437.2 334.9L438.1 332.9L439 330.9L440 328.8L441 326.7L442.1 324.6L443.3 322.5L444.5 320.4L445.7 318.3L447 316.3L448.4 314.2L449.8 312.1L451.2 310.1L452.7 308L454.2 306L455.8 304L457.4 302L459 300L460.7 298.1L462.4 296.2L464.1 294.3L465.8 292.4L467.6 290.6L469.3 288.8L471.1 287.1L472.9 285.4L474.7 283.7L476.6 282L478.4 280.3L480.2 278.7L482 277.1L483.8 275.6L485.6 274.1L487.3 272.6L489.1 271.1L490.8 269.6L492.6 268.2L494.2 266.8L495.9 265.5L497.5 264.1L499.1 262.8L500.6 261.6L502.1 260.3L503.6 259.1L505 257.9L506.3 256.7L507.6 255.6L508.9 254.5L510.1 253.4L511.2 252.3L512.2 251.3L513.2 250.3L514.1 249.4L515 248.5L515.8 247.6L516.5 246.8L517.1 245.9L517.7 245.2L518.1 244.5L518.5 243.8L518.8 243.1L519.1 242.6L519.2 242L519.3 241.5L519.3 241.1L519.2 240.7L519 240.4L518.8 240.1L518.5 239.9L518.1 239.7L517.6 239.7L517 239.6L516.4 239.7L515.7 239.8L515 240L514.2 240.3L513.3 240.6L512.4 241.1L511.4 241.6L510.4 242.2L509.4 242.8L508.3 243.6L507.1 244.4L506 245.4L504.8 246.4L503.6 247.4L502.4 248.6L501.1 249.9L499.9 251.2L498.6 252.6L497.4 254.1L496.1 255.7L494.9 257.4L493.6 259.1L492.4 260.9L491.1 262.8L489.9 264.8L488.7 266.8L487.5 268.9L486.3 271L485.2 273.2L484 275.4L482.9 277.7L481.7 280.1L480.6 282.4L479.6 284.9L478.5 287.3L477.4 289.8L476.4 292.3L475.3 294.8L474.3 297.4L473.3 299.9L472.3 302.5L471.3 305.1L470.3 307.7L469.3 310.3L468.3 312.8L467.3 315.4L466.3 318L465.3 320.5L464.3 323L463.3 325.5L462.4 327.9L461.4 330.3L460.4 332.7L459.4 335L458.5 337.3L457.5 339.5L456.5 341.7L455.5 343.8L454.5 345.8L453.6 347.8L452.6 349.7L451.6 351.6L450.7 353.4L449.7 355.1L448.8 356.7L447.8 358.2L446.9 359.7L446 361L445.1 362.3L444.2 363.5L443.3 364.6L442.4 365.6L441.6 366.6L440.8 367.4L440 368.1L439.2 368.8L438.4 369.3L437.7 369.7L437 370.1L436.3 370.3L435.7 370.5L435.1 370.5L434.5 370.5L434 370.3L433.5 370.1L433 369.7L432.6 369.3L432.2 368.8L431.8 368.2L431.5 367.5L431.3 366.7L431.2 366.2"/>
<path d="M456.9 397.1L456.8 396.2L456.8 395.1L456.8 394L456.8 392.8L456.9 391.6L457.1 390.3L457.3 388.9L457.6 387.5L458 386.1L458.4 384.5L458.8 383L459.3 381.4L459.9 379.7L460.5 378L461.2 376.3L461.9 374.6L462.7 372.8L463.5 371L464.4 369.2L465.4 367.3L466.4 365.5L467.4 363.6L468.5 361.8L469.7 359.9L470.9 358L472.1 356.2L473.4 354.3L474.8 352.5L476.1 350.6L477.6 348.8L479 347L480.5 345.2L482 343.4L483.6 341.6L485.2 339.9L486.8 338.2L488.4 336.5L490.1 334.8L491.8 333.1L493.4 331.5L495.1 329.9L496.8 328.3L498.6 326.8L500.3 325.3L502 323.8L503.7 322.3L505.4 320.8L507.1 319.4L508.8 318L510.5 316.6L512.2 315.2L513.8 313.9L515.5 312.6L517.1 311.3L518.7 310L520.2 308.7L521.8 307.4L523.2 306.2L524.7 305L526.1 303.8L527.5 302.6L528.8 301.5L530.1 300.3L531.4 299.2L532.5 298.1L533.7 297.1L534.8 296L535.8 295L536.8 294L537.7 293L538.6 292.1L539.4 291.1L540.1 290.3L540.8 289.4L541.4 288.6L541.9 287.8L542.4 287L542.8 286.3L543.2 285.7L543.4 285L543.6 284.5L543.8 283.9L543.8 283.4L543.8 283L543.8 282.6L543.6 282.3L543.4 282L543.2 281.8L542.8 281.6L542.5 281.5L542 281.5L541.5 281.5L540.9 281.7L540.3 281.8L539.6 282.1L538.9 282.4L538.1 282.8L537.3 283.3L536.4 283.8L535.5 284.4L534.6 285.1L533.6 285.9L532.6 286.8L531.6 287.7L530.5 288.8L529.4 289.9L528.4 291L527.2 292.3L526.1 293.6L525 295.1L523.8 296.6L522.7 298.1L521.5 299.8L520.4 301.5L519.2 303.2L518.1 305.1L516.9 307L515.8 309L514.6 311L513.5 313.1L512.3 315.2L511.2 317.4L510.1 319.6L509 321.8L507.8 324.1L506.7 326.4L505.6 328.8L504.6 331.2L503.5 333.6L502.4 336L501.3 338.4L500.2 340.8L499.2 343.3L498.1 345.7L497 348.2L495.9 350.6L494.8 353L493.8 355.4L492.7 357.8L491.6 360.2L490.5 362.5L489.4 364.8L488.4 367L487.3 369.2L486.2 371.4L485.1 373.5L484.1 375.6L483 377.6L481.9 379.5L480.8 381.4L479.8 383.2L478.7 384.9L477.7 386.6L476.6 388.2L475.6 389.7L474.6 391.1L473.5 392.5L472.5 393.8L471.5 395L470.6 396.1L469.6 397.1L468.7 398L467.8 398.8L466.9 399.6L466 400.2L465.2 400.8L464.4 401.3L463.6 401.7L462.9 402L462.2 402.2L461.5 402.3L460.9 402.3L460.3 402.2L459.7 402L459.2 401.8L458.7 401.4L458.3 401L458 400.5L457.6 399.9L457.4 399.2L457.1 398.4L457 397.6L456.9 397.1"/>
<path d="M482.1 420L482.5 418.9L483.1 417.4L483.7 415.8L484.4 414.3L485.2 412.7L486 411L486.9 409.4L487.8 407.7L488.8 406.1L489.9 404.4L490.9 402.7L492.1 401L493.2 399.3L494.4 397.6L495.7 395.9L497 394.2L498.3 392.5L499.7 390.9L501.1 389.2L502.6 387.5L504.1 385.9L505.6 384.3L507.1 382.7L508.6 381.1L510.2 379.5L511.8 378L513.4 376.4L515.1 374.9L516.7 373.4L518.3 371.9L520 370.5L521.6 369L523.3 367.6L524.9 366.2L526.6 364.8L528.2 363.5L529.8 362.1L531.4 360.8L533 359.5L534.6 358.2L536.2 356.9L537.7 355.6L539.3 354.3L540.8 353.1L542.2 351.8L543.7 350.6L545.1 349.4L546.4 348.2L547.8 347L549.1 345.8L550.3 344.7L551.5 343.5L552.7 342.4L553.8 341.3L554.9 340.2L555.9 339.1L556.9 338.1L557.8 337L558.7 336L559.5 335L560.3 334.1L561 333.1L561.6 332.3L562.2 331.4L562.7 330.6L563.2 329.8L563.6 329L564 328.3L564.3 327.6L564.5 327L564.7 326.4L564.8 325.8L564.8 325.4L564.8 324.9L564.8 324.5L564.6 324.2L564.5 323.9L564.2 323.7L563.9 323.6L563.6 323.5L563.2 323.5L562.7 323.5L562.2 323.7L561.7 323.8L561.1 324.1L560.4 324.4L559.7 324.8L559 325.3L558.3 325.9L557.5 326.5L556.6 327.2L555.8 328L554.9 328.9L554 329.8L553 330.9L552.1 332L551.1 333.1L550.1 334.4L549.1 335.7L548 337.1L547 338.6L546 340.1L544.9 341.8L543.8 343.4L542.8 345.2L541.7 347L540.6 348.9L539.5 350.8L538.4 352.8L537.4 354.8L536.3 356.9L535.2 359L534.1 361.2L533 363.4L531.9 365.6L530.8 367.9L529.8 370.2L528.7 372.5L527.6 374.8L526.5 377.1L525.4 379.5L524.3 381.8L523.2 384.2L522.1 386.6L521 388.9L519.9 391.3L518.8 393.6L517.7 395.9L516.6 398.2L515.4 400.4L514.3 402.7L513.2 404.8L512.1 407L510.9 409.1L509.8 411.1L508.6 413.1L507.5 415L506.4 416.9L505.2 418.7L504.4 420"/>
<path d="M534.1 420L534.6 419.5L536.2 418.1L537.9 416.6L539.5 415.2L541.1 413.8L542.7 412.4L544.3 411L545.9 409.6L547.5 408.2L549.1 406.9L550.7 405.5L552.3 404.2L553.9 402.9L555.4 401.5L556.9 400.2L558.4 398.9L559.9 397.6L561.4 396.3L562.8 395L564.2 393.8L565.5 392.5L566.8 391.2L568.1 390L569.4 388.8L570.6 387.5L571.8 386.3L572.9 385.1L574 384L575 382.8L576 381.7L576.9 380.5L577.8 379.4L578.7 378.3L579.5 377.3L580.2 376.2L580.9 375.2L581.5 374.3L582.1 373.3L582.6 372.4L583.1 371.6L583.5 370.7L583.9 370L584.2 369.2L584.4 368.5L584.6 367.9L584.8 367.3L584.8 366.7L584.9 366.2L584.9 365.8L584.8 365.4L584.6 365.1L584.5 364.9L584.2 364.7L584 364.5L583.6 364.5L583.3 364.5L582.8 364.6L582.4 364.7L581.9 365L581.3 365.3L580.7 365.6L580.1 366.1L579.5 366.6L578.8 367.2L578 367.9L577.3 368.7L576.5 369.5L575.7 370.4L574.9 371.4L574 372.5L573.1 373.6L572.2 374.8L571.3 376.1L570.4 377.5L569.4 378.9L568.5 380.5L567.5 382L566.5 383.7L565.6 385.4L564.6 387.2L563.6 389L562.5 390.9L561.5 392.9L560.5 394.9L559.5 396.9L558.4 399L557.4 401.1L556.4 403.3L555.3 405.5L554.3 407.7L553.2 410L552.2 412.3L551.1 414.6L550 416.9L549 419.2L548.6 420"/>
<path d="M161.3 418L159.1 407.2L167.5 414.4" stroke-width="0.85"/>
<path d="M184.5 378.2L182.8 367.4L190.8 374.9" stroke-width="0.85"/>
<path d="M210.8 341.8L209.8 330.9L217.4 338.9" stroke-width="0.85"/>
<path d="M241.9 310.9L242 299.9L248.7 308.6" stroke-width="0.85"/>
<path d="M279 288.4L280.7 277.5L286 287.2" stroke-width="0.85"/>
<path d="M321 277.6L325 267.3L328.2 277.8" stroke-width="0.85"/>
<path d="M364.4 280.5L370.5 271.3L371.4 282.3" stroke-width="0.85"/>
<path d="M404.4 296.6L412 288.7L410.9 299.6" stroke-width="0.85"/>
<path d="M438.5 323.2L447 316.3L444.6 327" stroke-width="0.85"/>
<path d="M467 356.8L476.1 350.6L472.8 361.1" stroke-width="0.85"/>
<path d="M491.7 394.8L501.1 389.2L497.1 399.4" stroke-width="0.85"/>
</g>
<path d="M57.5 361L59.8 362.7L62.1 364.4L64.4 366.1L66.8 367.9L69.1 369.7L71.4 371.5L73.7 373.4L76 375.3L78.3 377.1L80.6 379L82.9 381L85.2 382.9L87.6 384.9L89.9 386.8L92.2 388.8L94.5 390.8L96.8 392.9L99.1 394.9L101.4 396.9L103.8 399L106.1 401.1L108.4 403.2L110.7 405.2L113 407.3L115.3 409.4L117.6 411.5L119.9 413.7L122.2 415.8L124.6 417.9L126.9 420" stroke="#0000ff" stroke-width="2" fill="none"/>
<path d="M543.1 420L545.4 417.9L547.8 415.8L550.1 413.7L552.4 411.5L554.7 409.4L557 407.3L559.3 405.2L561.6 403.2L563.9 401.1L566.2 399L568.6 396.9L570.9 394.9L573.2 392.9L575.5 390.8L577.8 388.8L580.1 386.8L582.4 384.9L584.8 382.9L587.1 381L589.4 379L591.7 377.1L594 375.3L596.3 373.4L598.6 371.5L600.9 369.7L603.2 367.9L605.6 366.1L607.9 364.4L610.2 362.7L612.5 361" stroke="#0000ff" stroke-width="2" fill="none"/>
<text x="72.51" y="402.30" font-size="9.5" fill="#0000ff" textLength="26.69" lengthAdjust="spacingAndGlyphs" stroke="#0000ff" stroke-width="0.25">Behind</text>
<text x="63.57" y="410.20" font-size="9.5" fill="#0000ff" textLength="35.37" lengthAdjust="spacingAndGlyphs" stroke="#0000ff" stroke-width="0.25">the plane</text>
<text x="576.01" y="401.20" font-size="9.5" fill="#0000ff" textLength="27.00" lengthAdjust="spacingAndGlyphs" stroke="#0000ff" stroke-width="0.25">Behind</text>
<text x="576.57" y="409.80" font-size="9.5" fill="#0000ff" textLength="35.37" lengthAdjust="spacingAndGlyphs" stroke="#0000ff" stroke-width="0.25">the plane</text>
<g clip-path="url(#pan)">
<path d="M7 419.5L7 401.3L8 401.2L9 400.9L10 401.1L11 400.9L12 400.4L13 400.3L14 400.2L15 400.3L16 400L17 400.2L18 400.1L19 400.2L20 400.1L21 399.4L22 399.4L23 399.2L24 399.4L25 399.2L26 398.8L27 399.1L28 398.7L29 398.7L30 398.8L31 398.3L32 398.3L33 398.3L34 398.4L35 397.8L36 397.5L37 397.3L38 397.7L39 397.6L40 397.3L41 397.3L42 397.4L43 397.2L44 396.9L45 397.3L46 397.4L47 397.1L48 396.9L49 397L50 396.9L51 397.2L52 397.6L53 397.6L54 398.2L55 398.6L56 398.4L57 398.7L58 399.4L59 399L60 399.3L61 399.7L62 399.5L63 399.9L64 400.5L65 400.4L66 400.6L67 401L68 401.1L69 401L70 400.9L71 401L72 401.2L73 401.4L74 401.3L75 401.4L76 401.5L77 402L78 401.8L79 402L80 402.4L81 402.3L82 402.3L83 402.6L84 403.1L85 402.7L86 403.2L87 403.4L88 403.6L89 404L90 403.7L91 403.9L92 404.4L93 404.6L94 405.2L95 405.4L96 406.1L97 406.4L98 407.2L99 407.7L100 408.7L101 409.9L102 410.6L103 411.3L104 411.5L105 414.8L106 418.4L107 419.2L108 419.2L109 419.2L110 419.2L111 419.2L112 419.2L113 419.2L114 419.2L115 419.2L116 419.2L117 419.2L118 419.2L119 419.2L120 419.2L121 419.2L122 419.2L123 419.2L124 419.2L125 419.2L126 419.2L127 419.2L128 419.2L129 419.2L130 419.2L131 419.2L132 419.2L133 419.2L134 419.2L135 419.2L136 419.2L137 419.2L138 419.2L139 419.2L140 419.2L141 419.2L142 419.2L143 419.2L144 419.2L145 419.2L146 419.2L147 419.2L148 419.2L149 419.2L150 419.2L151 419.2L152 419.2L153 419.2L154 419.2L155 419.2L156 419.2L157 419.1L158 419.1L159 419.1L160 419.1L161 419.1L162 419.1L163 419.1L164 419.1L165 419.1L166 419.1L167 419.1L168 419.1L169 419.1L170 419.1L171 419.1L172 419.1L173 419.1L174 419.1L175 419.1L176 419.1L177 419.1L178 419.1L179 419.1L180 419.1L181 419.1L182 419.1L183 419.1L184 419.1L185 419.1L186 419.1L187 419.1L188 419.1L189 419.1L190 419.1L191 419.1L192 419.1L193 419.1L194 419.1L195 419.1L196 419.1L197 419.1L198 419.1L199 419.1L200 419.1L201 419.1L202 419.1L203 419.1L204 419.1L205 419.1L206 419.1L207 419.1L208 419.1L209 419.1L210 419.1L211 419.1L212 419.1L213 419.1L214 419.1L215 419.1L216 419.1L217 419.1L218 419.1L219 419.1L220 419.1L221 419.1L222 419.1L223 419.1L224 419.1L225 419.1L226 419.1L227 419.1L228 419.1L229 419.1L230 419.1L231 419.1L232 419.1L233 419.1L234 419.1L235 419.1L236 419.1L237 419.1L238 419.1L239 419.1L240 419.1L241 419.1L242 419.1L243 419.1L244 419.1L245 419.1L246 419.1L247 419.1L248 419.1L249 419.1L250 419.1L251 419.1L252 419.1L253 419.1L254 419.1L255 419.1L256 419L257 419L258 419L259 419L260 419L261 419L262 419L263 419L264 419L265 419L266 419L267 419L268 419L269 419L270 419L271 419L272 419L273 419L274 419L275 419L276 419L277 419L278 419L279 419L280 419L281 419L282 419L283 419L284 419L285 419L286 419L287 419L288 419L289 419L290 419L291 419L292 419L293 419L294 419L295 419L296 419L297 419L298 419L299 419L300 419L301 419L302 419L303 419L304 419L305 419L306 418.2L307 417.5L308 417.8L309 418L310 418.3L311 418L312 417.8L313 417.5L314 417.8L315 418L316 418.3L317 418L318 417.8L319 417.5L320 418.2L321 419" stroke="#ff0000" stroke-width="2.2" fill="none" stroke-linejoin="round"/>
<path d="M331 419L332 418.7L333 418.3L334 418L335 415L336 412L337 410.9L338 409.8L339 409.9L340 410L341 410.1L342 410.2L343 410.2L344 410.2L345 410.2L346 410.2L347 410.2L348 410.2L349 410.2L350 410.2L351 410.2L352 410.2L353 410.2L354 410.2L355 410.2L356 410.2L357 410.2L358 410.2L359 410.2L360 410.2L361 410.2L362 410.2L363 410.2L364 410.2L365 410.2L366 410.2L367 410.2L368 410.2L369 410.2L370 410.2L371 410.2L372 410.2L373 410.2L374 410.2L375 410.2L376 410.2L377 409.9L378 409.6L379 409.3L380 409.6L381 409.9L382 410.2L383 410.2L384 410.2L385 410.2L386 410.2L387 410.2L388 410.2L389 410.2L390 410.2L391 410.2L392 410.2L393 410.2L394 410.2L395 410.2L396 410.2L397 410.2L398 410.2L399 410.2L400 410.2L401 410.2L402 410.2L403 410.2L404 410.2L405 410.2L406 410.2L407 410.2L408 410.2L409 410.2L410 410.2L411 410.2L412 410.2L413 410.2L414 410.2L415 410.2L416 410.2L417 410.2L418 410.2L419 410.2L420 410.2L421 410.2L422 410.2L423 410.2L424 410.2L425 410.2L426 410.2L427 410.2L428 410.2L429 410.2L430 410.2L431 410.2L432 410.2L433 410.2L434 410.2L435 410.2L436 410.2L437 410.2L438 410.2L439 410.2L440 410.2L441 410.2L442 410.2L443 410.2L444 409.8L445 409.4L446 409L447 409.1L448 409.2L449 409.3L450 409.4L451 409.5L452 410.1L453 410.9L454 410.2L455 409.2L456 408L457 408.4L458 408.1L459 407.6L460 407.5L461 407.8L462 407.2L463 407.3L464 406.7L465 407.1L466 406.4L467 406.8L468 406.2L469 405.9L470 406.3L471 406L472 405.8L473 406L474 405.6L475 405.5L476 405.4L477 405.4L478 405.6L479 405.8L480 405.7L481 405.9L482 405.9L483 405.9L484 405.7L485 405.8L486 406.3L487 406L488 406.2L489 406L490 406.1L491 406.4L492 406.1L493 406.3L494 406L495 405.8L496 405.7L497 405.6L498 405.6L499 405.7L500 405.3L501 405.5L502 405L503 405L504 405L505 405.5L506 405L507 405.4L508 405.5L509 405.1L510 405.2L511 405.6L512 405L513 405.2L514 405L515 405.4L516 405.3L517 404.9L518 405.3L519 404.9L520 405.4L521 404.9L522 404.8L523 405L524 405.1L525 405.3L526 404.9L527 405.1L528 404.8L529 405.2L530 404.7L531 405.1L532 404.7L533 404.4L534 404.3L535 404.1L536 403.6L537 403.5L538 402.9L539 402.5L540 402.4L541 402.6L542 402.3L543 402L544 401.8L545 402.1L546 401.6L547 402L548 401.8L549 401.4L550 401.2L551 401.3L552 400.9L553 401.1L554 400.7L555 400.3L556 400.2L557 400.2L558 400L559 400.4L560 399.8L561 399.9L562 399.8L563 399.8L564 400.3L565 399.8L566 400.1L567 400.2L568 400.8L569 400.8L570 401L571 401.4L572 401.7L573 402.2L574 402.7L575 403.2L576 403L577 402.5L578 402.7L579 402.4L580 401.7L581 402.3L582 402.2L583 401.7L584 402L585 402.2L586 402.1L587 402.1L588 401.8L589 401.7L590 401.7L591 402.2L592 402.4L593 402.5L594 402.9L595 402.9L596 403.2L597 403.4L598 403.1L599 403.8L600 404L601 403.9L602 403.9L603 404.2L604 404.1L605 403.9L606 404.3L607 404.3L608 404L609 404.5L610 404.5L611 404.5L612 404.5L613 404.9L614 405L615 404.4L616 405L617 404.8L618 404.7L619 404.7L620 404.7L621 405.5L622 405.6L623 405.9L624 405.6L625 406L626 405.9L627 406.4L628 406.3L629 406.7L630 406.7L631 407.2L632 407.3L633 407.3L634 406.9L635 407L636 407L636 419.5" stroke="#ff0000" stroke-width="2.2" fill="none" stroke-linejoin="round"/>
<path d="M321 419.2H331" stroke="#000" stroke-width="1.6"/>
<path d="M7 419.5L7 401.3L8 401.2L9 400.9L10 401.1L11 400.9L12 400.4L13 400.3L14 400.2L15 400.3L16 400L17 400.2L18 400.1L19 400.2L20 400.1L21 399.4L22 399.4L23 399.2L24 399.4L25 399.2L26 398.8L27 399.1L28 398.7L29 398.7L30 398.8L31 398.3L32 398.3L33 398.3L34 398.4L35 397.8L36 397.5L37 397.3L38 397.7L39 397.6L40 397.3L41 397.3L42 397.4L43 397.2L44 396.9L45 397.3L46 397.4L47 397.1L48 396.9L49 397L50 396.9L51 397.2L52 397.6L53 397.6L54 398.2L55 398.6L56 398.4L57 398.7L58 399.4L59 399L60 399.3L61 399.7L62 399.5L63 399.9L64 400.5L65 400.4L66 400.6L67 401L68 401.1L69 401L70 400.9L71 401L72 401.2L73 401.4L74 401.3L75 401.4L76 401.5L77 402L78 401.8L79 402L80 402.4L81 402.3L82 402.3L83 402.6L84 403.1L85 402.7L86 403.2L87 403.4L88 403.6L89 404L90 403.7L91 403.9L92 404.4L93 404.6L94 405.2L95 405.4L96 406.1L97 406.4L98 407.2L99 407.7L100 408.7L101 409.9L102 410.6L103 411.3L104 411.5L105 414.8L106 418.4" stroke="#ff0000" stroke-width="2.9" fill="none" stroke-linejoin="round"/>
<path d="M452 410.1L453 410.9L454 410.2L455 409.2L456 408L457 408.4L458 408.1L459 407.6L460 407.5L461 407.8L462 407.2L463 407.3L464 406.7L465 407.1L466 406.4L467 406.8L468 406.2L469 405.9L470 406.3L471 406L472 405.8L473 406L474 405.6L475 405.5L476 405.4L477 405.4L478 405.6L479 405.8L480 405.7L481 405.9L482 405.9L483 405.9L484 405.7L485 405.8L486 406.3L487 406L488 406.2L489 406L490 406.1L491 406.4L492 406.1L493 406.3L494 406L495 405.8L496 405.7L497 405.6L498 405.6L499 405.7L500 405.3L501 405.5L502 405L503 405L504 405L505 405.5L506 405L507 405.4L508 405.5L509 405.1L510 405.2L511 405.6L512 405L513 405.2L514 405L515 405.4L516 405.3L517 404.9L518 405.3L519 404.9L520 405.4L521 404.9L522 404.8L523 405L524 405.1L525 405.3L526 404.9L527 405.1L528 404.8L529 405.2L530 404.7L531 405.1L532 404.7L533 404.4L534 404.3L535 404.1L536 403.6L537 403.5L538 402.9L539 402.5L540 402.4L541 402.6L542 402.3L543 402L544 401.8L545 402.1L546 401.6L547 402L548 401.8L549 401.4L550 401.2L551 401.3L552 400.9L553 401.1L554 400.7L555 400.3L556 400.2L557 400.2L558 400L559 400.4L560 399.8L561 399.9L562 399.8L563 399.8L564 400.3L565 399.8L566 400.1L567 400.2L568 400.8L569 400.8L570 401L571 401.4L572 401.7L573 402.2L574 402.7L575 403.2L576 403L577 402.5L578 402.7L579 402.4L580 401.7L581 402.3L582 402.2L583 401.7L584 402L585 402.2L586 402.1L587 402.1L588 401.8L589 401.7L590 401.7L591 402.2L592 402.4L593 402.5L594 402.9L595 402.9L596 403.2L597 403.4L598 403.1L599 403.8L600 404L601 403.9L602 403.9L603 404.2L604 404.1L605 403.9L606 404.3L607 404.3L608 404L609 404.5L610 404.5L611 404.5L612 404.5L613 404.9L614 405L615 404.4L616 405L617 404.8L618 404.7L619 404.7L620 404.7L621 405.5L622 405.6L623 405.9L624 405.6L625 406L626 405.9L627 406.4L628 406.3L629 406.7L630 406.7L631 407.2L632 407.3L633 407.3L634 406.9L635 407L636 407L636 419.5" stroke="#ff0000" stroke-width="2.9" fill="none" stroke-linejoin="round"/>
<g fill="#ff0000"><rect x="8.0" y="398.9" width="2" height="2"/><rect x="9.0" y="399.1" width="2" height="2"/><rect x="13.0" y="398.2" width="2" height="2"/><rect x="18.0" y="398.2" width="2" height="2"/><rect x="20.0" y="397.4" width="2" height="2"/><rect x="24.0" y="397.2" width="2" height="2"/><rect x="25.0" y="396.8" width="2" height="2"/><rect x="33.0" y="396.4" width="2" height="2"/><rect x="48.0" y="395.0" width="2" height="2"/><rect x="57.0" y="397.4" width="2" height="2"/><rect x="65.0" y="398.6" width="2" height="2"/><rect x="70.0" y="399.0" width="2" height="2"/><rect x="71.0" y="399.2" width="2" height="2"/><rect x="72.0" y="399.4" width="2" height="2"/><rect x="73.0" y="399.3" width="2" height="2"/><rect x="76.0" y="400.0" width="2" height="2"/><rect x="78.0" y="400.0" width="2" height="2"/><rect x="81.0" y="400.3" width="2" height="2"/><rect x="83.0" y="401.1" width="2" height="2"/><rect x="85.0" y="401.2" width="2" height="2"/><rect x="86.0" y="401.4" width="2" height="2"/><rect x="97.0" y="405.2" width="2" height="2"/><rect x="104.0" y="412.8" width="2" height="2"/><rect x="462.0" y="405.3" width="2" height="2"/><rect x="463.0" y="404.7" width="2" height="2"/><rect x="468.0" y="403.9" width="2" height="2"/><rect x="472.0" y="404.0" width="2" height="2"/><rect x="481.0" y="403.9" width="2" height="2"/><rect x="482.0" y="403.9" width="2" height="2"/><rect x="500.0" y="403.5" width="2" height="2"/><rect x="506.0" y="403.4" width="2" height="2"/><rect x="514.0" y="403.4" width="2" height="2"/><rect x="522.0" y="403.0" width="2" height="2"/><rect x="527.0" y="402.8" width="2" height="2"/><rect x="535.0" y="401.6" width="2" height="2"/><rect x="537.0" y="400.9" width="2" height="2"/><rect x="538.0" y="400.5" width="2" height="2"/><rect x="541.0" y="400.3" width="2" height="2"/><rect x="542.0" y="400.0" width="2" height="2"/><rect x="543.0" y="399.8" width="2" height="2"/><rect x="546.0" y="400.0" width="2" height="2"/><rect x="554.0" y="398.3" width="2" height="2"/><rect x="556.0" y="398.2" width="2" height="2"/><rect x="571.0" y="399.7" width="2" height="2"/><rect x="577.0" y="400.7" width="2" height="2"/><rect x="587.0" y="399.8" width="2" height="2"/><rect x="592.0" y="400.5" width="2" height="2"/><rect x="595.0" y="401.2" width="2" height="2"/><rect x="598.0" y="401.8" width="2" height="2"/><rect x="603.0" y="402.1" width="2" height="2"/><rect x="606.0" y="402.3" width="2" height="2"/><rect x="611.0" y="402.5" width="2" height="2"/><rect x="612.0" y="402.9" width="2" height="2"/><rect x="620.0" y="403.5" width="2" height="2"/><rect x="624.0" y="404.0" width="2" height="2"/><rect x="630.0" y="405.2" width="2" height="2"/></g>
</g>
<circle cx="348.4" cy="151.7" r="5.8" fill="#fff" stroke="#000" stroke-width="1.1"/>
<text x="345.39" y="155.30" font-size="10.3" fill="#000" stroke="#000" stroke-width="0.25">1</text>
<circle cx="346.4" cy="162.8" r="5.8" fill="#fff" stroke="#000" stroke-width="1.1"/>
<text x="343.52" y="166.40" font-size="10.3" fill="#000" stroke="#000" stroke-width="0.25">2</text>
<circle cx="335" cy="194.5" r="5.8" fill="#fff" stroke="#000" stroke-width="1.1"/>
<text x="332.17" y="198.10" font-size="10.3" fill="#000" stroke="#000" stroke-width="0.25">3</text>
<circle cx="335.2" cy="236.8" r="5.8" fill="#fff" stroke="#000" stroke-width="1.1"/>
<text x="332.37" y="240.40" font-size="10.3" fill="#000" stroke="#000" stroke-width="0.25">4</text>
<circle cx="335" cy="278.3" r="5.8" fill="#fff" stroke="#000" stroke-width="1.1"/>
<text x="332.14" y="281.90" font-size="10.3" fill="#000" stroke="#000" stroke-width="0.25">5</text>
<circle cx="335" cy="310.2" r="5.8" fill="#fff" stroke="#000" stroke-width="1.1"/>
<text x="332.09" y="313.80" font-size="10.3" fill="#000" stroke="#000" stroke-width="0.25">6</text>
<circle cx="335" cy="322.4" r="5.8" fill="#fff" stroke="#000" stroke-width="1.1"/>
<text x="332.12" y="326.00" font-size="10.3" fill="#000" stroke="#000" stroke-width="0.25">7</text>
<text x="73.62" y="361.80" font-size="9.6" fill="#000">6h</text>
<text x="93.32" y="320.90" font-size="9.6" fill="#000">7h</text>
<text x="114.67" y="278.90" font-size="9.6" fill="#000">8h</text>
<text x="138.64" y="238.30" font-size="9.6" fill="#000">9h</text>
<text x="165.94" y="197.60" font-size="9.6" fill="#000">10h</text>
<text x="220.47" y="162.80" font-size="9.6" fill="#000">11h</text>
<text x="322.14" y="146.20" font-size="9.6" fill="#000">12h</text>
<text x="419.64" y="160.40" font-size="9.6" fill="#000">13h</text>
<text x="483.94" y="194.30" font-size="9.6" fill="#000">14h</text>
<text x="517.84" y="234.20" font-size="9.6" fill="#000">15h</text>
<text x="541.84" y="275.50" font-size="9.6" fill="#000">16h</text>
<text x="563.24" y="318.00" font-size="9.6" fill="#000">17h</text>
<text x="583.54" y="358.30" font-size="9.6" fill="#000">18h</text>
<rect x="642.5" y="70.5" width="140" height="399" fill="#fff" stroke="#d9d9d9" stroke-width="1"/>
<rect x="643" y="71" width="1" height="398" fill="#ececec"/>
<path d="M677.5 71 V55.5 H742.5 V71" fill="#e8e8e8" stroke="#d9d9d9" stroke-width="1"/>
<path d="M644.5 72 V54.5 H677.5 V72" fill="#fff" stroke="#d9d9d9" stroke-width="1"/>
<rect x="645" y="70" width="32" height="2" fill="#fff"/>
<text x="648.00" y="65.30" font-size="9.9" fill="#000" textLength="24.20" lengthAdjust="spacingAndGlyphs">Points</text>
<text x="682.29" y="65.50" font-size="9.9" fill="#000" textLength="54.81" lengthAdjust="spacingAndGlyphs">Diffuse Factor</text>
<text x="650.99" y="88.20" font-size="9.9" fill="#000" textLength="11.40" lengthAdjust="spacingAndGlyphs">No</text>
<text x="674.60" y="88.20" font-size="9.9" fill="#000" textLength="30.93" lengthAdjust="spacingAndGlyphs">Azimuth</text>
<text x="712.23" y="88.20" font-size="9.9" fill="#000" textLength="37.11" lengthAdjust="spacingAndGlyphs">Height[°]</text>
<rect x="679.3" y="100.30" width="37" height="14.5" rx="1.5" fill="#fff" stroke="#7a7a7a" stroke-width="1.6"/>
<rect x="719.8" y="100.30" width="37.5" height="14.5" rx="1.5" fill="#fff" stroke="#7a7a7a" stroke-width="1.6"/>
<text x="660.93" y="110.60" font-size="9.8" fill="#000" textLength="5.07" lengthAdjust="spacingAndGlyphs">1</text>
<text x="680.03" y="110.60" font-size="9.8" fill="#000" textLength="26.12" lengthAdjust="spacingAndGlyphs">-179.0</text>
<text x="720.58" y="110.60" font-size="9.8" fill="#000" textLength="12.81" lengthAdjust="spacingAndGlyphs">0.5</text>
<rect x="679.3" y="118.14" width="37" height="14.5" rx="1.5" fill="#fff" stroke="#7a7a7a" stroke-width="1.6"/>
<rect x="719.8" y="118.14" width="37.5" height="14.5" rx="1.5" fill="#fff" stroke="#7a7a7a" stroke-width="1.6"/>
<text x="661.05" y="128.44" font-size="9.8" fill="#000" textLength="5.07" lengthAdjust="spacingAndGlyphs">2</text>
<text x="680.03" y="128.44" font-size="9.8" fill="#000" textLength="26.12" lengthAdjust="spacingAndGlyphs">-178.0</text>
<text x="720.58" y="128.44" font-size="9.8" fill="#000" textLength="12.81" lengthAdjust="spacingAndGlyphs">0.6</text>
<rect x="679.3" y="135.98" width="37" height="14.5" rx="1.5" fill="#fff" stroke="#7a7a7a" stroke-width="1.6"/>
<rect x="719.8" y="135.98" width="37.5" height="14.5" rx="1.5" fill="#fff" stroke="#7a7a7a" stroke-width="1.6"/>
<text x="661.09" y="146.28" font-size="9.8" fill="#000" textLength="5.07" lengthAdjust="spacingAndGlyphs">3</text>
<text x="680.03" y="146.28" font-size="9.8" fill="#000" textLength="26.12" lengthAdjust="spacingAndGlyphs">-177.0</text>
<text x="720.58" y="146.28" font-size="9.8" fill="#000" textLength="12.81" lengthAdjust="spacingAndGlyphs">0.5</text>
<rect x="679.3" y="153.82" width="37" height="14.5" rx="1.5" fill="#fff" stroke="#7a7a7a" stroke-width="1.6"/>
<rect x="719.8" y="153.82" width="37.5" height="14.5" rx="1.5" fill="#fff" stroke="#7a7a7a" stroke-width="1.6"/>
<text x="661.09" y="164.12" font-size="9.8" fill="#000" textLength="5.07" lengthAdjust="spacingAndGlyphs">4</text>
<text x="680.03" y="164.12" font-size="9.8" fill="#000" textLength="26.12" lengthAdjust="spacingAndGlyphs">-176.0</text>
<text x="720.58" y="164.12" font-size="9.8" fill="#000" textLength="12.81" lengthAdjust="spacingAndGlyphs">0.7</text>
<rect x="679.3" y="171.66" width="37" height="14.5" rx="1.5" fill="#fff" stroke="#7a7a7a" stroke-width="1.6"/>
<rect x="719.8" y="171.66" width="37.5" height="14.5" rx="1.5" fill="#fff" stroke="#7a7a7a" stroke-width="1.6"/>
<text x="661.07" y="181.96" font-size="9.8" fill="#000" textLength="5.07" lengthAdjust="spacingAndGlyphs">5</text>
<text x="680.03" y="181.96" font-size="9.8" fill="#000" textLength="26.12" lengthAdjust="spacingAndGlyphs">-175.0</text>
<text x="720.58" y="181.96" font-size="9.8" fill="#000" textLength="12.81" lengthAdjust="spacingAndGlyphs">0.5</text>
<rect x="679.3" y="189.50" width="37" height="14.5" rx="1.5" fill="#fff" stroke="#7a7a7a" stroke-width="1.6"/>
<rect x="719.8" y="189.50" width="37.5" height="14.5" rx="1.5" fill="#fff" stroke="#7a7a7a" stroke-width="1.6"/>
<text x="661.03" y="199.80" font-size="9.8" fill="#000" textLength="5.07" lengthAdjust="spacingAndGlyphs">6</text>
<text x="680.03" y="199.80" font-size="9.8" fill="#000" textLength="26.12" lengthAdjust="spacingAndGlyphs">-166.0</text>
<text x="720.58" y="199.80" font-size="9.8" fill="#000" textLength="12.81" lengthAdjust="spacingAndGlyphs">0.4</text>
<rect x="679.3" y="207.34" width="37" height="14.5" rx="1.5" fill="#fff" stroke="#7a7a7a" stroke-width="1.6"/>
<rect x="719.8" y="207.34" width="37.5" height="14.5" rx="1.5" fill="#fff" stroke="#7a7a7a" stroke-width="1.6"/>
<text x="661.05" y="217.64" font-size="9.8" fill="#000" textLength="5.07" lengthAdjust="spacingAndGlyphs">7</text>
<text x="680.03" y="217.64" font-size="9.8" fill="#000" textLength="26.12" lengthAdjust="spacingAndGlyphs">-165.0</text>
<text x="720.58" y="217.64" font-size="9.8" fill="#000" textLength="12.81" lengthAdjust="spacingAndGlyphs">0.6</text>
<rect x="679.3" y="225.18" width="37" height="14.5" rx="1.5" fill="#fff" stroke="#7a7a7a" stroke-width="1.6"/>
<rect x="719.8" y="225.18" width="37.5" height="14.5" rx="1.5" fill="#fff" stroke="#7a7a7a" stroke-width="1.6"/>
<text x="661.07" y="235.48" font-size="9.8" fill="#000" textLength="5.07" lengthAdjust="spacingAndGlyphs">8</text>
<text x="680.03" y="235.48" font-size="9.8" fill="#000" textLength="26.12" lengthAdjust="spacingAndGlyphs">-164.0</text>
<text x="720.58" y="235.48" font-size="9.8" fill="#000" textLength="12.81" lengthAdjust="spacingAndGlyphs">0.4</text>
<rect x="679.3" y="243.02" width="37" height="14.5" rx="1.5" fill="#fff" stroke="#7a7a7a" stroke-width="1.6"/>
<rect x="719.8" y="243.02" width="37.5" height="14.5" rx="1.5" fill="#fff" stroke="#7a7a7a" stroke-width="1.6"/>
<text x="661.07" y="253.32" font-size="9.8" fill="#000" textLength="5.07" lengthAdjust="spacingAndGlyphs">9</text>
<text x="680.03" y="253.32" font-size="9.8" fill="#000" textLength="26.12" lengthAdjust="spacingAndGlyphs">-163.0</text>
<text x="720.44" y="253.32" font-size="9.8" fill="#000" textLength="12.81" lengthAdjust="spacingAndGlyphs">2.1</text>
<rect x="679.3" y="260.86" width="37" height="14.5" rx="1.5" fill="#fff" stroke="#7a7a7a" stroke-width="1.6"/>
<rect x="719.8" y="260.86" width="37.5" height="14.5" rx="1.5" fill="#fff" stroke="#7a7a7a" stroke-width="1.6"/>
<text x="658.36" y="271.16" font-size="9.8" fill="#000" textLength="10.14" lengthAdjust="spacingAndGlyphs">10</text>
<text x="680.03" y="271.16" font-size="9.8" fill="#000" textLength="26.12" lengthAdjust="spacingAndGlyphs">-161.0</text>
<text x="720.44" y="271.16" font-size="9.8" fill="#000" textLength="12.81" lengthAdjust="spacingAndGlyphs">2.4</text>
<rect x="679.3" y="278.70" width="37" height="14.5" rx="1.5" fill="#fff" stroke="#7a7a7a" stroke-width="1.6"/>
<rect x="719.8" y="278.70" width="37.5" height="14.5" rx="1.5" fill="#fff" stroke="#7a7a7a" stroke-width="1.6"/>
<text x="658.75" y="289.00" font-size="9.8" fill="#000" textLength="9.46" lengthAdjust="spacingAndGlyphs">11</text>
<text x="680.03" y="289.00" font-size="9.8" fill="#000" textLength="26.12" lengthAdjust="spacingAndGlyphs">-160.0</text>
<text x="720.44" y="289.00" font-size="9.8" fill="#000" textLength="12.81" lengthAdjust="spacingAndGlyphs">2.5</text>
<rect x="679.3" y="296.54" width="37" height="14.5" rx="1.5" fill="#fff" stroke="#7a7a7a" stroke-width="1.6"/>
<rect x="719.8" y="296.54" width="37.5" height="14.5" rx="1.5" fill="#fff" stroke="#7a7a7a" stroke-width="1.6"/>
<text x="658.41" y="306.84" font-size="9.8" fill="#000" textLength="10.14" lengthAdjust="spacingAndGlyphs">12</text>
<text x="680.03" y="306.84" font-size="9.8" fill="#000" textLength="26.12" lengthAdjust="spacingAndGlyphs">-158.0</text>
<text x="720.44" y="306.84" font-size="9.8" fill="#000" textLength="12.81" lengthAdjust="spacingAndGlyphs">2.8</text>
<rect x="679.3" y="314.38" width="37" height="14.5" rx="1.5" fill="#fff" stroke="#7a7a7a" stroke-width="1.6"/>
<rect x="719.8" y="314.38" width="37.5" height="14.5" rx="1.5" fill="#fff" stroke="#7a7a7a" stroke-width="1.6"/>
<text x="658.38" y="324.68" font-size="9.8" fill="#000" textLength="10.14" lengthAdjust="spacingAndGlyphs">13</text>
<text x="680.03" y="324.68" font-size="9.8" fill="#000" textLength="26.12" lengthAdjust="spacingAndGlyphs">-157.0</text>
<text x="720.44" y="324.68" font-size="9.8" fill="#000" textLength="12.81" lengthAdjust="spacingAndGlyphs">2.9</text>
<rect x="679.3" y="332.22" width="37" height="14.5" rx="1.5" fill="#fff" stroke="#7a7a7a" stroke-width="1.6"/>
<rect x="719.8" y="332.22" width="37.5" height="14.5" rx="1.5" fill="#fff" stroke="#7a7a7a" stroke-width="1.6"/>
<text x="658.31" y="342.52" font-size="9.8" fill="#000" textLength="10.14" lengthAdjust="spacingAndGlyphs">14</text>
<text x="680.03" y="342.52" font-size="9.8" fill="#000" textLength="26.12" lengthAdjust="spacingAndGlyphs">-156.0</text>
<text x="720.58" y="342.52" font-size="9.8" fill="#000" textLength="12.81" lengthAdjust="spacingAndGlyphs">3.0</text>
<rect x="679.3" y="350.06" width="37" height="14.5" rx="1.5" fill="#fff" stroke="#7a7a7a" stroke-width="1.6"/>
<rect x="719.8" y="350.06" width="37.5" height="14.5" rx="1.5" fill="#fff" stroke="#7a7a7a" stroke-width="1.6"/>
<text x="658.38" y="360.36" font-size="9.8" fill="#000" textLength="10.14" lengthAdjust="spacingAndGlyphs">15</text>
<text x="680.03" y="360.36" font-size="9.8" fill="#000" textLength="26.12" lengthAdjust="spacingAndGlyphs">-155.0</text>
<text x="720.58" y="360.36" font-size="9.8" fill="#000" textLength="12.81" lengthAdjust="spacingAndGlyphs">3.1</text>
<rect x="679.3" y="367.90" width="37" height="14.5" rx="1.5" fill="#fff" stroke="#7a7a7a" stroke-width="1.6"/>
<rect x="719.8" y="367.90" width="37.5" height="14.5" rx="1.5" fill="#fff" stroke="#7a7a7a" stroke-width="1.6"/>
<text x="658.38" y="378.20" font-size="9.8" fill="#000" textLength="10.14" lengthAdjust="spacingAndGlyphs">16</text>
<text x="680.03" y="378.20" font-size="9.8" fill="#000" textLength="26.12" lengthAdjust="spacingAndGlyphs">-153.0</text>
<text x="720.58" y="378.20" font-size="9.8" fill="#000" textLength="12.81" lengthAdjust="spacingAndGlyphs">3.4</text>
<rect x="763" y="98.6" width="13.6" height="285" fill="#f0f0f0"/>
<rect x="763.5" y="112" width="11.5" height="13.6" fill="#c2c2c2"/>
<path d="M766.8 107 L769.5 104.3 L772.2 107" fill="none" stroke="#a0a0a0" stroke-width="1.1"/>
<path d="M766.8 374 L769.5 376.7 L772.2 374" fill="none" stroke="#a0a0a0" stroke-width="1.1"/>
<rect x="659.6" y="395.9" width="115.8" height="18.4" rx="2" fill="#d6d6d6" stroke="#8e8e8e" stroke-width="1.3"/>
<rect x="661" y="397.3" width="113" height="15.6" fill="none" stroke="#e2e2e2" stroke-width="0.8"/>
<path d="M692.1 399.2 L696.2 403.3 L689.5 409.7 L685.4 405.6 Z" fill="#6b6b6b" stroke="#666" stroke-width="0.8" stroke-linejoin="round"/>
<path d="M686.9 405.6 L689.3 403.3 L692.2 406.3 L689.6 408.5 Z" fill="#fff"/>
<rect x="684" y="410.9" width="12.7" height="1.2" fill="#3a3a3a"/>
<text x="698.97" y="409.20" font-size="9.9" fill="#000" textLength="52.68" lengthAdjust="spacingAndGlyphs">Clear Horizon</text></svg></body></html>
